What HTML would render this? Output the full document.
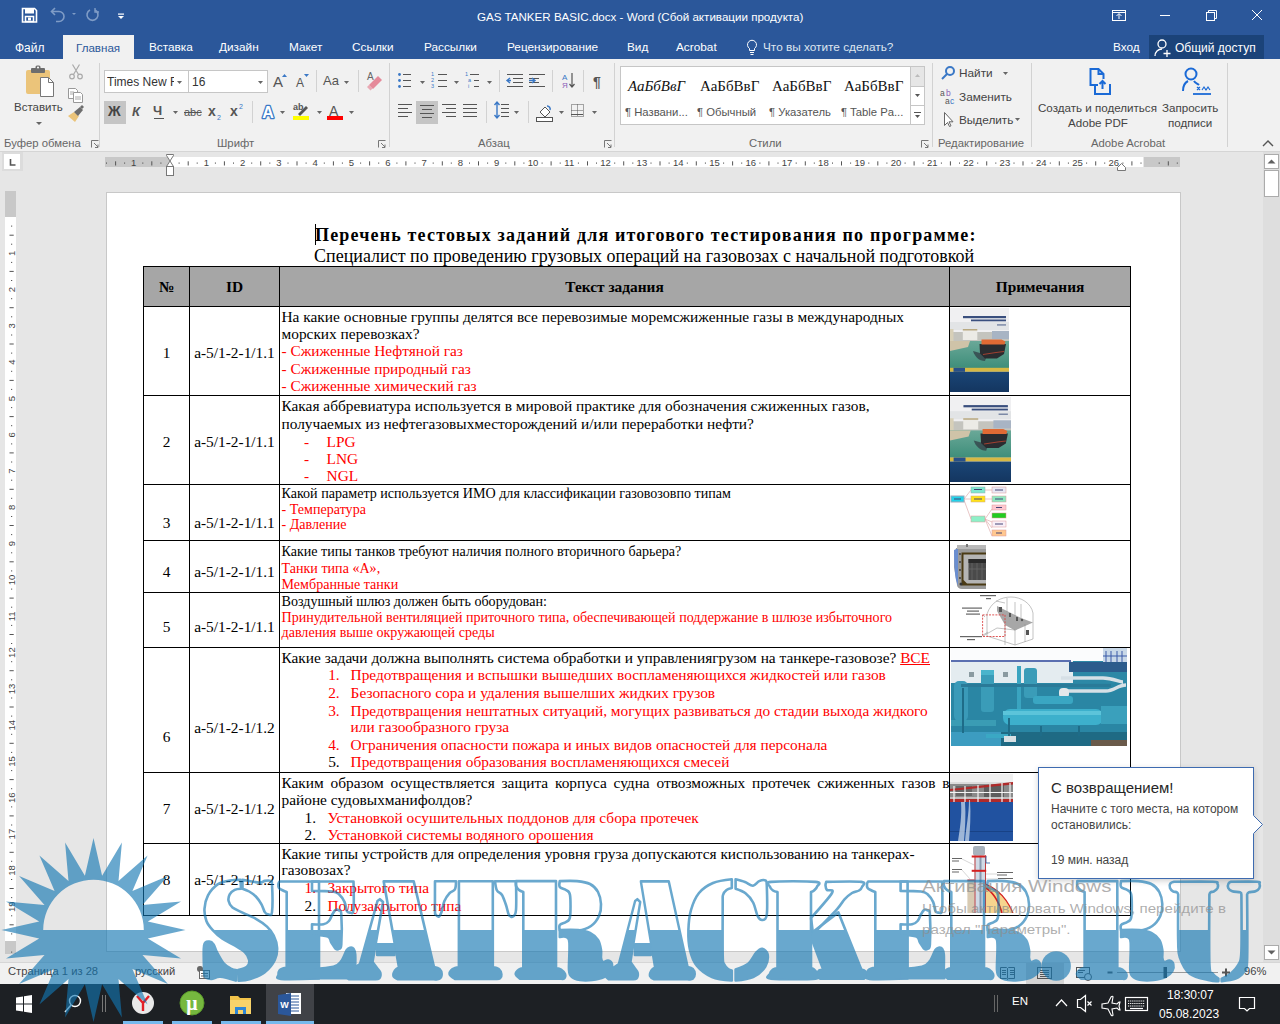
<!DOCTYPE html>
<html><head><meta charset="utf-8">
<style>
*{margin:0;padding:0;box-sizing:border-box}
html,body{width:1280px;height:1024px;overflow:hidden;background:#e6e6e6;font-family:"Liberation Sans",sans-serif;position:relative}
.a{position:absolute}
.s{position:absolute;font-family:"Liberation Serif",serif;white-space:nowrap;color:#000;line-height:1}
.u{position:absolute;font-family:"Liberation Sans",sans-serif;white-space:nowrap;line-height:1}
#titlebar{left:0;top:0;width:1280px;height:59px;background:#2b579a}
#ribbon{left:0;top:59px;width:1280px;height:93px;background:#f1f1f1;border-bottom:1px solid #d5d5d5}
#doc{left:0;top:152px;width:1263px;height:810px;background:#e6e6e6}
#page{left:107px;top:193px;width:1073px;height:758px;background:#fff;box-shadow:0 0 0 1px #c8c8c8}
#status{left:0;top:962px;width:1280px;height:22px;background:#f1f1f1}
#taskbar{left:0;top:984px;width:1280px;height:40px;background:#1f1f1f}

</style></head><body>
<div id="titlebar" class="a"></div>
<!-- QAT -->
<svg class="a" style="left:0;top:0" width="140" height="34">
  <g fill="none" stroke="#fff" stroke-width="1.6">
    <path d="M22.5 8.5h12l2 2v11.5h-14z"/>
  </g>
  <rect x="25" y="9" width="9" height="4.5" fill="#fff"/>
  <rect x="25.5" y="16.5" width="8" height="5" fill="none" stroke="#fff" stroke-width="1.5"/>
  <rect x="28" y="17.5" width="3" height="3" fill="#fff"/>
  <g fill="none" stroke="#7f9cc6" stroke-width="1.6">
    <path d="M52 11.5h7a5 5 0 0 1 0 10h-3"/>
    <path d="M55 8l-3.5 3.5 3.5 3.5"/>
    <path d="M90 10a5.5 5.5 0 1 0 5 0"/>
  </g>
  <path d="M72 13h4l-2 2z" fill="#7f9cc6"/>
  <path d="M95 8v4h4" fill="none" stroke="#7f9cc6" stroke-width="1.4"/>
  <rect x="118" y="13.5" width="6" height="1.2" fill="#fff"/>
  <path d="M118 16h6l-3 3z" fill="#fff"/>
</svg>
<div class="u" style="left:477px;top:11px;font-size:11.6px;color:#fff">GAS TANKER BASIC.docx - Word (Сбой активации продукта)</div>
<svg class="a" style="left:1100px;top:0" width="180" height="34">
  <g fill="none" stroke="#fff" stroke-width="1">
    <rect x="12.5" y="10.5" width="13" height="10"/>
    <path d="M12.5 12.5h13"/>
    <path d="M19 19v-5M16.5 16l2.5-2.5 2.5 2.5"/>
    <path d="M60 15.5h10"/>
    <rect x="106.5" y="12.5" width="8" height="8"/>
    <path d="M108.5 12.5v-2h8v8h-2"/>
    <path d="M152 10l10 10M162 10l-10 10"/>
  </g>
</svg>
<!-- tabs -->
<div class="a" style="left:63px;top:35px;width:71px;height:25px;background:#f1f1f1"></div>
<div class="u" style="left:15px;top:42px;font-size:12px;color:#fff">Файл</div>
<div class="u" style="left:76px;top:42px;font-size:11.6px;color:#2b579a">Главная</div>
<div class="u" style="left:149px;top:42px;font-size:11.8px;color:#fff">Вставка</div>
<div class="u" style="left:219px;top:42px;font-size:11.8px;color:#fff">Дизайн</div>
<div class="u" style="left:289px;top:42px;font-size:11.8px;color:#fff">Макет</div>
<div class="u" style="left:352px;top:42px;font-size:11.8px;color:#fff">Ссылки</div>
<div class="u" style="left:424px;top:42px;font-size:11.8px;color:#fff">Рассылки</div>
<div class="u" style="left:507px;top:42px;font-size:11.8px;color:#fff">Рецензирование</div>
<div class="u" style="left:627px;top:42px;font-size:11.8px;color:#fff">Вид</div>
<div class="u" style="left:676px;top:42px;font-size:11.8px;color:#fff">Acrobat</div>
<svg class="a" style="left:745px;top:38px" width="14" height="18"><g fill="none" stroke="#fff" stroke-width="1"><path d="M4.5 12.5v-2a4.5 4.5 0 1 1 5 0v2z"/><path d="M5 14.5h4M5.5 16.5h3"/></g></svg>
<div class="u" style="left:763px;top:42px;font-size:11.8px;color:#dfe6f0">Что вы хотите сделать?</div>
<div class="u" style="left:1113px;top:42px;font-size:11.8px;color:#fff">Вход</div>
<div class="a" style="left:1149px;top:35px;width:115px;height:24px;background:#1b4379"></div>
<svg class="a" style="left:1153px;top:37px" width="22" height="22"><g fill="none" stroke="#fff" stroke-width="1.3"><circle cx="9" cy="7" r="4"/><path d="M2 19c0-4 3-7 7-7"/><path d="M14 13v7M10.5 16.5h7"/></g></svg>
<div class="u" style="left:1175px;top:42px;font-size:12px;color:#fff">Общий доступ</div>
<div id="ribbon" class="a"></div>
<!-- separators -->
<div class="a" style="left:99px;top:63px;width:1px;height:84px;background:#d2d2d2"></div>
<div class="a" style="left:389px;top:63px;width:1px;height:84px;background:#d2d2d2"></div>
<div class="a" style="left:614px;top:63px;width:1px;height:84px;background:#d2d2d2"></div>
<div class="a" style="left:932px;top:63px;width:1px;height:84px;background:#d2d2d2"></div>
<div class="a" style="left:1031px;top:63px;width:1px;height:84px;background:#d2d2d2"></div>
<div class="a" style="left:1227px;top:63px;width:1px;height:84px;background:#d2d2d2"></div>
<!-- group labels -->
<div class="u" style="left:4px;top:138px;font-size:11.3px;color:#666">Буфер обмена</div>
<div class="u" style="left:217px;top:138px;font-size:11.3px;color:#666">Шрифт</div>
<div class="u" style="left:478px;top:138px;font-size:11.3px;color:#666">Абзац</div>
<div class="u" style="left:749px;top:138px;font-size:11.3px;color:#666">Стили</div>
<div class="u" style="left:938px;top:138px;font-size:11.3px;color:#666">Редактирование</div>
<div class="u" style="left:1091px;top:138px;font-size:11.3px;color:#666">Adobe Acrobat</div>
<svg class="a" style="left:0;top:136px" width="1280" height="14">
  <g fill="none" stroke="#777" stroke-width="1">
    <path d="M91.5 11.5v-7h7M91.5 4.5"/><path d="M94 7l4 4M98 8.5v3h-3"/>
    <path d="M378.5 11.5v-7h7"/><path d="M381 7l4 4M385 8.5v3h-3"/>
    <path d="M604.5 11.5v-7h7"/><path d="M607 7l4 4M611 8.5v3h-3"/>
    <path d="M921.5 11.5v-7h7"/><path d="M924 7l4 4M928 8.5v3h-3"/>
    <path d="M1263 10l5-5 5 5" stroke="#555" stroke-width="1.4"/>
  </g>
</svg>
<!-- clipboard -->
<svg class="a" style="left:0;top:59px" width="100" height="80">
  <path d="M26 13a2 2 0 0 1 2-2h20a2 2 0 0 1 2 2v22H28a2 2 0 0 1-2-2z" fill="#ebc47a"/>
  <rect x="31" y="9" width="14" height="5" rx="1" fill="#6d6d6d"/>
  <rect x="35.5" y="6.5" width="5" height="4" rx="1.5" fill="#6d6d6d"/>
  <circle cx="38" cy="8.5" r="1" fill="#fff"/>
  <path d="M40.5 18.5h8l5 5v14h-13z" fill="#fff" stroke="#777" stroke-width="1"/>
  <path d="M48.5 18.5v5h5" fill="none" stroke="#777" stroke-width="1"/>
  <path d="M36 63h6l-3 3z" fill="#666"/>
  <!-- cut -->
  <g fill="none" stroke="#aaa" stroke-width="1.2"><circle cx="72" cy="76" r="0"/><circle cx="72" cy="17.5" r="2.3"/><circle cx="80" cy="17.5" r="2.3"/><path d="M72.5 5.5l6 10M79.5 5.5l-6 10"/></g>
  <!-- copy -->
  <g fill="#fff" stroke="#999" stroke-width="1"><path d="M68.5 29.5h7l2 2v8h-9z"/><path d="M73.5 33.5h7l2 2v8h-9z"/></g>
  <g stroke="#aaa" stroke-width="1"><path d="M70 33h4M70 35h3M75 38h6M75 40h6"/></g>
  <!-- painter -->
  <path d="M68 57l6-4 5 4-4 6z" fill="#ebc47a"/>
  <path d="M74 53l6-5 3 3-5 6z" fill="#6d6d6d"/>
  <path d="M80 48l2-2 2 2-2 2z" fill="#6d6d6d"/>
</svg>
<div class="u" style="left:14px;top:102px;font-size:11.5px;color:#444">Вставить</div>
<!-- font group -->
<div class="a" style="left:104px;top:70px;width:85px;height:23px;background:#fff;border:1px solid #c6c6c6"></div>
<div class="a" style="left:188px;top:70px;width:80px;height:23px;background:#fff;border:1px solid #c6c6c6"></div>
<div class="u" style="left:107px;top:76px;font-size:12px;color:#333;width:67px;overflow:hidden">Times New Roman</div>
<div class="u" style="left:192px;top:76px;font-size:12px;color:#333">16</div>
<div class="a" style="left:104px;top:101px;width:22px;height:23px;background:#c5c5c5"></div>
<svg class="a" style="left:100px;top:59px" width="290" height="70">
  <g fill="#666">
    <path d="M77 22h5l-2.5 3z"/><path d="M158 22h5l-2.5 3z"/>
    <path d="M244 22h5l-2.5 3z"/>
    <path d="M73 52h5l-2.5 3z"/>
    <path d="M180 52h5l-2.5 3z"/><path d="M217 52h5l-2.5 3z"/><path d="M249 52h5l-2.5 3z"/>
  </g>
  <g fill="#3a78c6"><path d="M182 18h5l-2.5-3z"/><path d="M204 15h5l-2.5 3z"/></g>
  <g fill="none" stroke="#d2d2d2"><path d="M216.5 11v22M258.5 11v22M152.5 42v22"/></g>
</svg>
<div class="u" style="left:273px;top:74px;font-size:15px;color:#555">A</div>
<div class="u" style="left:296px;top:77px;font-size:12px;color:#555">A</div>
<div class="u" style="left:323px;top:74px;font-size:13px;color:#555">Aa</div>
<div class="u" style="left:367px;top:72px;font-size:10px;color:#666">A</div>
<svg class="a" style="left:360px;top:65px" width="30" height="30"><path d="M9 20l9-9 4 4-9 9z" fill="#e58a9a"/><path d="M9 20l3.5 3.5 -2 2-3.5-3.5z" fill="#e58a9a" opacity="0.7"/></svg>
<div class="u" style="left:108px;top:104px;font-size:14px;font-weight:bold;color:#444">Ж</div>
<div class="u" style="left:132px;top:105px;font-size:13px;font-style:italic;font-weight:bold;color:#555">К</div>
<div class="u" style="left:153px;top:104px;font-size:13px;font-weight:bold;color:#555">Ч</div>
<div class="a" style="left:154px;top:118px;width:10px;height:1px;background:#555"></div>
<div class="u" style="left:184px;top:107px;font-size:11px;color:#555;text-decoration:line-through">abc</div>
<div class="u" style="left:208px;top:104px;font-size:14px;font-weight:bold;color:#555">x</div>
<div class="u" style="left:217px;top:114px;font-size:7px;color:#3a78c6">2</div>
<div class="u" style="left:230px;top:104px;font-size:14px;font-weight:bold;color:#555">x</div>
<div class="u" style="left:239px;top:103px;font-size:7px;color:#3a78c6">2</div>
<svg class="a" style="left:258px;top:100px" width="22" height="22"><text x="10" y="18" text-anchor="middle" font-family="Liberation Sans" font-size="16" font-weight="bold" fill="#fff" stroke="#3a78c6" stroke-width="2.6" stroke-linejoin="round" paint-order="stroke">A</text></svg>
<div class="u" style="left:293px;top:103px;font-size:9px;font-weight:bold;color:#555">ab</div>
<svg class="a" style="left:290px;top:100px" width="60" height="22">
  <path d="M8 14l8-8 2 2-8 8z" fill="#555"/>
  <rect x="3" y="16" width="16" height="4" fill="#ffff00"/>
  <rect x="37" y="16" width="16" height="4" fill="#ff0000"/>
</svg>
<div class="u" style="left:329px;top:104px;font-size:14px;color:#555">A</div>
<!-- paragraph -->
<svg class="a" style="left:390px;top:59px" width="225" height="70">
  <g fill="#3a78c6"><circle cx="9.5" cy="15.5" r="1.4"/><circle cx="9.5" cy="21.5" r="1.4"/><circle cx="9.5" cy="27.5" r="1.4"/></g>
  <g stroke="#555" stroke-width="1"><path d="M13 15.5h8M13 21.5h8M13 27.5h8"/>
   <path d="M48 15.5h9M48 21.5h9M48 27.5h9"/>
   <path d="M80 15.5h9M84 21.5h5M84 27.5h5"/>
   <path d="M117 15.5h16M123 19.5h10M123 23.5h10M117 27.5h16"/>
   <path d="M139 15.5h16M139 19.5h10M139 23.5h10M139 27.5h16"/>
   <path d="M8 45.5h14M8 49.5h10M8 53.5h14M8 57.5h10"/>
   <path d="M30 45.5h14M32 49.5h10M30 53.5h14M32 57.5h10"/>
   <path d="M52 45.5h14M56 49.5h10M52 53.5h14M56 57.5h10"/>
   <path d="M73 45.5h14M73 49.5h14M73 53.5h14M73 57.5h14"/>
   <path d="M111 45.5h8M111 49.5h8M111 53.5h8M111 57.5h8"/>
   <path d="M181 55.5h12"/>
  </g>
  <g fill="#3a78c6" font-family="Liberation Sans" font-size="5.5"><text x="41" y="17">1</text><text x="41" y="23">2</text><text x="41" y="29">3</text><text x="75" y="17">1</text><text x="78" y="23">a</text><text x="78" y="29">i</text></g>
  <g fill="#666"><path d="M30 22h5l-2.5 3z"/><path d="M64 22h5l-2.5 3z"/><path d="M97 22h5l-2.5 3z"/>
   <path d="M124 52h5l-2.5 3z"/><path d="M169 52h5l-2.5 3z"/><path d="M202 52h5l-2.5 3z"/></g>
  <g fill="none" stroke="#3a78c6" stroke-width="1.4"><path d="M121 21.5h-4M120 19l-3 2.5 3 2.5"/><path d="M139 21.5h5M142 19l3 2.5-3 2.5"/>
   <path d="M107 43v16M104.5 46l2.5-3 2.5 3M104.5 56l2.5 3 2.5-3"/></g>
  <text x="172" y="21" font-family="Liberation Sans" font-size="8" fill="#3a78c6">A</text>
  <text x="172" y="29" font-family="Liberation Sans" font-size="8" fill="#8b5db8">Я</text>
  <path d="M182 14v14M179.5 25l2.5 3 2.5-3" fill="none" stroke="#555" stroke-width="1.2"/>
  <text x="203" y="28" font-family="Liberation Sans" font-size="14" font-weight="bold" fill="#555">¶</text>
  <g fill="none" stroke="#d2d2d2"><path d="M109.5 11v22M162.5 11v22M193.5 11v22M96.5 42v22M138.5 42v22"/></g>
  <path d="M150 53l5-5 5 5-5 5z" fill="#fff" stroke="#555"/>
  <path d="M157 47a3 3 0 0 1 3 4" fill="none" stroke="#3a78c6" stroke-width="1.5"/>
  <rect x="146.5" y="58.5" width="16" height="4" fill="#fff" stroke="#555"/>
  <g fill="none" stroke="#555" stroke-dasharray="1 1"><rect x="181.5" y="45.5" width="12" height="12"/><path d="M187.5 45.5v12M181.5 51.5h12"/></g>
</svg>
<div class="a" style="left:416px;top:101px;width:22px;height:23px;background:#c5c5c5"></div>
<svg class="a" style="left:416px;top:101px" width="22" height="23"><path d="M4 4.5h14M6 8.5h10M4 12.5h14M6 16.5h10" stroke="#555" stroke-width="1"/></svg>
<!-- styles gallery -->
<div class="a" style="left:620px;top:66px;width:305px;height:59px;background:#fff;border:1px solid #c6c6c6"></div>
<div class="a" style="left:910px;top:66px;width:15px;height:59px;border:1px solid #c6c6c6;background:#fff"></div>
<div class="a" style="left:911px;top:67px;width:13px;height:19px;background:#e6e6e6"></div>
<div class="a" style="left:910px;top:86px;width:15px;height:1px;background:#c6c6c6"></div>
<div class="a" style="left:910px;top:105px;width:15px;height:1px;background:#c6c6c6"></div>
<svg class="a" style="left:910px;top:66px" width="15" height="59"><path d="M5 11l2.5-3 2.5 3z" fill="#bbb"/><path d="M5 28h5l-2.5 3z" fill="#555"/><path d="M4 46.5h7" stroke="#555"/><path d="M5 49h5l-2.5 3z" fill="#555"/></svg>
<div class="s" style="left:628px;top:79px;font-size:15px;font-style:italic;color:#111">АаБбВвГ</div>
<div class="s" style="left:700px;top:79px;font-size:15px;color:#111">АаБбВвГ</div>
<div class="s" style="left:772px;top:79px;font-size:15px;color:#111">АаБбВвГ</div>
<div class="s" style="left:844px;top:79px;font-size:15px;color:#111">АаБбВвГ</div>
<div class="u" style="left:625px;top:107px;font-size:11.3px;color:#555">¶ Названи...</div>
<div class="u" style="left:697px;top:107px;font-size:11.3px;color:#555">¶ Обычный</div>
<div class="u" style="left:769px;top:107px;font-size:11.3px;color:#555">¶ Указатель</div>
<div class="u" style="left:841px;top:107px;font-size:11.3px;color:#555">¶ Table Pa...</div>
<!-- editing -->
<svg class="a" style="left:935px;top:59px" width="95" height="75">
  <g fill="none" stroke="#3a78c6" stroke-width="2"><circle cx="15" cy="12" r="4"/><path d="M12 15l-5 5"/></g>
  <path d="M68 13h5l-2.5 3z" fill="#666"/>
  <path d="M80 59h5l-2.5 3z" fill="#666"/>
  <text x="5" y="37" font-family="Liberation Sans" font-size="8.5" fill="#555">a</text>
  <text x="11" y="37" font-family="Liberation Sans" font-size="8.5" fill="#8b5db8">b</text>
  <text x="10" y="45" font-family="Liberation Sans" font-size="8.5" fill="#555">a</text>
  <text x="15" y="45" font-family="Liberation Sans" font-size="8.5" fill="#3a78c6">c</text>
  <path d="M9.5 53.5v13l3-3 2 4 1.5-.7-2-4h4z" fill="#fff" stroke="#666" stroke-width="1"/>
</svg>
<div class="u" style="left:959px;top:68px;font-size:11.8px;color:#444">Найти</div>
<div class="u" style="left:959px;top:92px;font-size:11.8px;color:#444">Заменить</div>
<div class="u" style="left:959px;top:114.5px;font-size:11.8px;color:#444">Выделить</div>
<!-- acrobat -->
<svg class="a" style="left:1080px;top:62px" width="150" height="36">
  <g fill="none" stroke="#1b6ad6" stroke-width="2">
    <path d="M18 23h-7.5V7h8l5 5v5"/><path d="M18.5 7v5h5"/>
    <path d="M15 22v10h15V22"/><path d="M22.5 27v-8M19.5 22l3-3 3 3"/>
    <circle cx="111" cy="12" r="5.5"/><path d="M103 29c0-6 3-9 5-10M114 19c1 2 4 3 5 4"/>
    <path d="M113 32h18" stroke-width="1.8"/>
  </g>
  <path d="M117 25l3 3M120 25l-3 3M122 28l2-3 2 3 2-3 2 3" fill="none" stroke="#1b6ad6" stroke-width="1.2"/>
</svg>
<div class="u" style="left:1038px;top:102px;font-size:11.6px;color:#444">Создать и поделиться</div>
<div class="u" style="left:1068px;top:117px;font-size:11.6px;color:#444">Adobe PDF</div>
<div class="u" style="left:1162px;top:102px;font-size:11.6px;color:#444">Запросить</div>
<div class="u" style="left:1168px;top:117px;font-size:11.6px;color:#444">подписи</div>
<div id="doc" class="a"></div>
<div id="page" class="a">
</div>
<div class="s" style="left:315px;top:225.62px;font-size:18px;font-weight:bold;letter-spacing:1.17px;">Перечень тестовых заданий для итогового тестирования по программе:</div>
<div class="s" style="left:314px;top:246.93px;font-size:18px;">Специалист по проведению грузовых операций на газовозах с начальной подготовкой</div>
<div class="a" style="left:315px;top:224px;width:1px;height:21px;background:#000"></div>
<div class="a" style="left:143px;top:266px;width:988px;height:41px;background:#a6a6a6"></div>
<div class="a" style="left:143px;top:266px;width:1px;height:650px;background:#000"></div>
<div class="a" style="left:189px;top:266px;width:1px;height:650px;background:#000"></div>
<div class="a" style="left:279px;top:266px;width:1px;height:650px;background:#000"></div>
<div class="a" style="left:949px;top:266px;width:1px;height:650px;background:#000"></div>
<div class="a" style="left:1130px;top:266px;width:1px;height:650px;background:#000"></div>
<div class="a" style="left:143px;top:266px;width:988px;height:1px;background:#000"></div>
<div class="a" style="left:143px;top:306px;width:988px;height:1px;background:#000"></div>
<div class="a" style="left:143px;top:395px;width:988px;height:1px;background:#000"></div>
<div class="a" style="left:143px;top:484px;width:988px;height:1px;background:#000"></div>
<div class="a" style="left:143px;top:540px;width:988px;height:1px;background:#000"></div>
<div class="a" style="left:143px;top:592px;width:988px;height:1px;background:#000"></div>
<div class="a" style="left:143px;top:647px;width:988px;height:1px;background:#000"></div>
<div class="a" style="left:143px;top:772px;width:988px;height:1px;background:#000"></div>
<div class="a" style="left:143px;top:843px;width:988px;height:1px;background:#000"></div>
<div class="a" style="left:143px;top:915px;width:988px;height:1px;background:#000"></div>
<div class="s" style="left:66.5px;width:200px;text-align:center;top:278.64px;font-size:15.36px;font-weight:bold;">№</div>
<div class="s" style="left:134.5px;width:200px;text-align:center;top:278.64px;font-size:15.36px;font-weight:bold;">ID</div>
<div class="s" style="left:514.5px;width:200px;text-align:center;top:278.64px;font-size:15.36px;font-weight:bold;">Текст задания</div>
<div class="s" style="left:940.0px;width:200px;text-align:center;top:278.64px;font-size:15.36px;font-weight:bold;">Примечания</div>
<div class="s" style="left:66.5px;width:200px;text-align:center;top:344.74px;font-size:15.36px;">1</div>
<div class="s" style="left:134.5px;width:200px;text-align:center;top:344.74px;font-size:15.36px;">a-5/1-2-1/1.1</div>
<div class="s" style="left:66.5px;width:200px;text-align:center;top:433.74px;font-size:15.36px;">2</div>
<div class="s" style="left:134.5px;width:200px;text-align:center;top:433.74px;font-size:15.36px;">a-5/1-2-1/1.1</div>
<div class="s" style="left:66.5px;width:200px;text-align:center;top:514.74px;font-size:15.36px;">3</div>
<div class="s" style="left:134.5px;width:200px;text-align:center;top:514.74px;font-size:15.36px;">a-5/1-2-1/1.1</div>
<div class="s" style="left:66.5px;width:200px;text-align:center;top:563.94px;font-size:15.36px;">4</div>
<div class="s" style="left:134.5px;width:200px;text-align:center;top:563.94px;font-size:15.36px;">a-5/1-2-1/1.1</div>
<div class="s" style="left:66.5px;width:200px;text-align:center;top:619.14px;font-size:15.36px;">5</div>
<div class="s" style="left:134.5px;width:200px;text-align:center;top:619.14px;font-size:15.36px;">a-5/1-2-1/1.1</div>
<div class="s" style="left:66.5px;width:200px;text-align:center;top:729.14px;font-size:15.36px;">6</div>
<div class="s" style="left:134.5px;width:200px;text-align:center;top:719.74px;font-size:15.36px;">a-5/1-2-1/1.2</div>
<div class="s" style="left:66.5px;width:200px;text-align:center;top:800.74px;font-size:15.36px;">7</div>
<div class="s" style="left:134.5px;width:200px;text-align:center;top:800.74px;font-size:15.36px;">a-5/1-2-1/1.2</div>
<div class="s" style="left:66.5px;width:200px;text-align:center;top:872.14px;font-size:15.36px;">8</div>
<div class="s" style="left:134.5px;width:200px;text-align:center;top:872.14px;font-size:15.36px;">a-5/1-2-1/1.2</div>
<div class="s" style="left:281.5px;top:309.04px;font-size:15.36px;">На какие основные группы делятся все перевозимые моремсжиженные газы в международных</div>
<div class="s" style="left:281.5px;top:325.94px;font-size:15.36px;">морских перевозках?</div>
<div class="s" style="left:281.5px;top:343.44px;font-size:15.36px;color:#f00;">- Сжиженные Нефтяной газ</div>
<div class="s" style="left:281.5px;top:361.34px;font-size:15.36px;color:#f00;">- Сжиженные природный газ</div>
<div class="s" style="left:281.5px;top:378.44px;font-size:15.36px;color:#f00;">- Сжиженные химический газ</div>
<div class="s" style="left:281.5px;top:398.04px;font-size:15.36px;">Какая аббревиатура используется в мировой практике для обозначения сжиженных газов,</div>
<div class="s" style="left:281.5px;top:415.54px;font-size:15.36px;">получаемых из нефтегазовыхместорождений и/или переработки нефти?</div>
<div class="s" style="left:304px;top:433.74px;font-size:15.36px;color:#f00;">-</div>
<div class="s" style="left:326.6px;top:433.74px;font-size:15.36px;color:#f00;">LPG</div>
<div class="s" style="left:304px;top:450.94px;font-size:15.36px;color:#f00;">-</div>
<div class="s" style="left:326.6px;top:450.94px;font-size:15.36px;color:#f00;">LNG</div>
<div class="s" style="left:304px;top:468.44px;font-size:15.36px;color:#f00;">-</div>
<div class="s" style="left:326.6px;top:468.44px;font-size:15.36px;color:#f00;">NGL</div>
<div class="s" style="left:281.5px;top:486.01px;font-size:14.08px;">Какой параметр используется ИМО для классификации газовозовпо типам</div>
<div class="s" style="left:281.5px;top:501.71px;font-size:14.08px;color:#f00;">- Температура</div>
<div class="s" style="left:281.5px;top:517.21px;font-size:14.08px;color:#f00;">- Давление</div>
<div class="s" style="left:281.5px;top:544.01px;font-size:14.08px;">Какие типы танков требуют наличия полного вторичного барьера?</div>
<div class="s" style="left:281.5px;top:560.91px;font-size:14.08px;color:#f00;">Танки типа «А»,</div>
<div class="s" style="left:281.5px;top:576.81px;font-size:14.08px;color:#f00;">Мембранные танки</div>
<div class="s" style="left:281.5px;top:593.71px;font-size:14.08px;">Воздушный шлюз должен быть оборудован:</div>
<div class="s" style="left:281.5px;top:609.61px;font-size:14.08px;color:#f00;">Принудительной вентиляцией приточного типа, обеспечивающей поддержание в шлюзе избыточного</div>
<div class="s" style="left:281.5px;top:625.21px;font-size:14.08px;color:#f00;">давления выше окружающей среды</div>
<div class="s" style="left:281.5px;top:650.04px;font-size:15.36px;">Какие задачи должна выполнять система обработки и управлениягрузом на танкере-газовозе? <span style="color:#f00;text-decoration:underline">ВСЕ</span></div>
<div class="s" style="left:328.2px;top:667.14px;font-size:15.36px;color:#f00;">1.</div>
<div class="s" style="left:350.6px;top:667.14px;font-size:15.36px;color:#f00;">Предотвращения и вспышки вышедших воспламеняющихся жидкостей или газов</div>
<div class="s" style="left:328.2px;top:684.94px;font-size:15.36px;color:#f00;">2.</div>
<div class="s" style="left:350.6px;top:684.94px;font-size:15.36px;color:#f00;">Безопасного сора и удаления вышелших жидких грузов</div>
<div class="s" style="left:328.2px;top:702.64px;font-size:15.36px;color:#f00;">3.</div>
<div class="s" style="left:350.6px;top:702.64px;font-size:15.36px;color:#f00;">Предотвращения нештатных ситуаций, могущих развиваться до стадии выхода жидкого</div>
<div class="s" style="left:350.6px;top:719.44px;font-size:15.36px;color:#f00;">или газообразного груза</div>
<div class="s" style="left:328.2px;top:737.34px;font-size:15.36px;color:#f00;">4.</div>
<div class="s" style="left:350.6px;top:737.34px;font-size:15.36px;color:#f00;">Ограничения опасности пожара и иных видов опасностей для персонала</div>
<div class="s" style="left:328.2px;top:754.44px;font-size:15.36px;">5.</div>
<div class="s" style="left:350.6px;top:754.44px;font-size:15.36px;color:#f00;">Предотвращения образования воспламеняющихся смесей</div>
<div class="s" style="left:281.5px;top:775.04px;font-size:15.36px;width:668px;text-align:justify;text-align-last:justify;">Каким образом осуществляется защита корпуса судна отвозможных протечек сжиженных газов в</div>
<div class="s" style="left:281.5px;top:791.64px;font-size:15.36px;">районе судовыхманифолдов?</div>
<div class="s" style="left:304.5px;top:809.54px;font-size:15.36px;">1.</div>
<div class="s" style="left:327.4px;top:809.54px;font-size:15.36px;color:#f00;">Установкой осушительных поддонов для сбора протечек</div>
<div class="s" style="left:304.5px;top:827.14px;font-size:15.36px;">2.</div>
<div class="s" style="left:327.4px;top:827.14px;font-size:15.36px;color:#f00;">Установкой системы водяного орошения</div>
<div class="s" style="left:281.5px;top:845.54px;font-size:15.36px;">Какие типы устройств для определения уровня груза допускаются киспользованию на танкерах-</div>
<div class="s" style="left:281.5px;top:862.34px;font-size:15.36px;">газовозах?</div>
<div class="s" style="left:304.5px;top:880.04px;font-size:15.36px;color:#f00;">1.</div>
<div class="s" style="left:327.4px;top:880.04px;font-size:15.36px;color:#f00;">Закрытого типа</div>
<div class="s" style="left:304.5px;top:897.74px;font-size:15.36px;">2.</div>
<div class="s" style="left:327.4px;top:897.74px;font-size:15.36px;color:#f00;">Полузакрытого типа</div>
<svg class="a" style="left:950px;top:308px" width="59" height="84" viewBox="0 0 59 84" preserveAspectRatio="none">
<defs><linearGradient id="seaa" x1="0" y1="0" x2="0" y2="1"><stop offset="0" stop-color="#6aa898"/><stop offset="1" stop-color="#3e8e7a"/></linearGradient>
<linearGradient id="nva" x1="0" y1="0" x2="0" y2="1"><stop offset="0" stop-color="#1a4576"/><stop offset="1" stop-color="#143660"/></linearGradient></defs>
<rect width="59" height="84" fill="#f0f0f2"/>
<rect x="0" y="14" width="59" height="8" fill="#e2e4e6"/>
<g fill="#3a4f7e"><rect x="13" y="8" width="43" height="2.2"/><rect x="21" y="11.5" width="35" height="1.8"/><rect x="47" y="16.5" width="9" height="0.9"/></g>
<rect x="0" y="24" width="59" height="10" fill="#c4c4be"/>
<rect x="12.8" y="21" width="14.5" height="11" fill="#ecebe6"/>
<rect x="12.8" y="21" width="14.5" height="1.5" fill="#b8a880"/>
<rect x="0" y="21" width="3.5" height="12" fill="#d8d0b8"/>
<rect x="42" y="23" width="17" height="8" fill="#a8b4c4"/>
<rect x="0" y="33" width="59" height="27" fill="url(#seaa)"/>
<path d="M0 33h20l-2 6-18 4z" fill="#cfc3a8"/>
<path d="M23 43c2 6 6 10 12 10l2-6z" fill="#33434a" opacity="0.8"/>
<path d="M29.5 36h26.5l-2 10-7 4.5h-12l-5-5z" fill="#2a2c30"/>
<path d="M33 46.5l13-2 8-1" fill="none" stroke="#a04030" stroke-width="1"/>
<path d="M31.5 31.5h20l4 2-1 3h-23z" fill="#e06a34"/>
<rect x="0" y="59.8" width="59" height="4" fill="#d6b844"/>
<rect x="3.5" y="59.8" width="11.5" height="4" fill="#28508a"/>
<rect x="0" y="63.8" width="59" height="20.2" fill="url(#nva)"/>
</svg>
<svg class="a" style="left:950px;top:397px" width="61" height="85" viewBox="0 0 59 84" preserveAspectRatio="none">
<defs><linearGradient id="seab" x1="0" y1="0" x2="0" y2="1"><stop offset="0" stop-color="#6aa898"/><stop offset="1" stop-color="#3e8e7a"/></linearGradient>
<linearGradient id="nvb" x1="0" y1="0" x2="0" y2="1"><stop offset="0" stop-color="#1a4576"/><stop offset="1" stop-color="#143660"/></linearGradient></defs>
<rect width="59" height="84" fill="#f0f0f2"/>
<rect x="0" y="14" width="59" height="8" fill="#e2e4e6"/>
<g fill="#3a4f7e"><rect x="13" y="8" width="43" height="2.2"/><rect x="21" y="11.5" width="35" height="1.8"/><rect x="47" y="16.5" width="9" height="0.9"/></g>
<rect x="0" y="24" width="59" height="10" fill="#c4c4be"/>
<rect x="12.8" y="21" width="14.5" height="11" fill="#ecebe6"/>
<rect x="12.8" y="21" width="14.5" height="1.5" fill="#b8a880"/>
<rect x="0" y="21" width="3.5" height="12" fill="#d8d0b8"/>
<rect x="42" y="23" width="17" height="8" fill="#a8b4c4"/>
<rect x="0" y="33" width="59" height="27" fill="url(#seab)"/>
<path d="M0 33h20l-2 6-18 4z" fill="#cfc3a8"/>
<path d="M23 43c2 6 6 10 12 10l2-6z" fill="#33434a" opacity="0.8"/>
<path d="M29.5 36h26.5l-2 10-7 4.5h-12l-5-5z" fill="#2a2c30"/>
<path d="M33 46.5l13-2 8-1" fill="none" stroke="#a04030" stroke-width="1"/>
<path d="M31.5 31.5h20l4 2-1 3h-23z" fill="#e06a34"/>
<rect x="0" y="59.8" width="59" height="4" fill="#d6b844"/>
<rect x="3.5" y="59.8" width="11.5" height="4" fill="#28508a"/>
<rect x="0" y="63.8" width="59" height="20.2" fill="url(#nvb)"/>
</svg>
<svg class="a" style="left:950px;top:485px" width="57" height="53" viewBox="0 0 57 53">
<g stroke="#d8a0a0" stroke-width="0.6" fill="none"><path d="M14 14L21 5M14 14h7M14 15l7 19M35 5h7M35 14h7M35 34l7-10M35 34l7 3M35 34l7 9M35 34l7 17"/></g>
<rect x="1" y="11" width="13" height="6" fill="#22d3ea" stroke="#9ab"/>
<rect x="21" y="2" width="14" height="6" fill="#7ee8d0" stroke="#9aa" stroke-width="0.5"/>
<rect x="21" y="11" width="14" height="6" fill="#ffe21a" stroke="#ca8" stroke-width="0.5"/>
<rect x="21" y="31" width="14" height="6" fill="#8ef0c8" stroke="#d99" stroke-width="0.5"/>
<rect x="42" y="2" width="14" height="6" fill="#e8e8f4" stroke="#d99" stroke-width="0.5"/>
<rect x="42" y="11" width="14" height="6" fill="#8ee8c0" stroke="#d99" stroke-width="0.5"/>
<rect x="42" y="20" width="14" height="5" fill="#ffc8d0" stroke="#d99" stroke-width="0.5"/>
<rect x="42" y="28" width="14" height="5" fill="#22cc22" stroke="#d99" stroke-width="0.5"/>
<rect x="42" y="36" width="14" height="6" fill="#f8f0f8" stroke="#d99" stroke-width="0.5"/>
<rect x="42" y="45" width="14" height="6" fill="#ffc890" stroke="#d99" stroke-width="0.5"/>
<g fill="#447"><rect x="24" y="4" width="8" height="1"/><rect x="24" y="13.5" width="8" height="1"/><rect x="45" y="4.5" width="8" height="1"/><rect x="45" y="13.5" width="8" height="1"/><rect x="4" y="13.5" width="7" height="1"/><rect x="46" y="22" width="6" height="1"/><rect x="45" y="38.5" width="8" height="1"/><rect x="46" y="47.5" width="6" height="1"/></g>
</svg>
<svg class="a" style="left:953px;top:544px" width="33" height="46" viewBox="0 0 33 46">
<path d="M3 4h30v41H9c-3 0-5-2-5-4l-3-18c0-8 1-14 2-19z" fill="#9a9a9a"/>
<path d="M1 6c3-1 4-2 4-2v38l-2-6c-1-6-2-14-2-30z" fill="#6a8ed0"/>
<rect x="4" y="1" width="29" height="4" fill="#b8b8b8"/>
<rect x="13" y="0" width="2" height="3" fill="#777"/>
<rect x="8.5" y="8.5" width="24.5" height="33" fill="#4a3a14"/>
<path d="M10.5 10.5h22.5v29H14l-3.5-3.5z" fill="#b4b4b4"/>
<rect x="15.5" y="15" width="17.5" height="21" fill="#4a4a4a"/>
<rect x="15.5" y="15" width="17.5" height="4" fill="#2a2a2a"/>
<path d="M15.5 25h17.5M24 19v17M19 19v17M29 19v17" stroke="#6a6a6a" stroke-width="0.7"/>
<g fill="#333"><circle cx="7" cy="10" r="0.9"/><circle cx="7" cy="18" r="0.9"/><circle cx="7" cy="26" r="0.9"/><circle cx="7" cy="34" r="0.9"/><circle cx="8" cy="40" r="1.5"/></g>
</svg>
<svg class="a" style="left:959px;top:594px" width="76" height="52" viewBox="0 0 76 52">
<g fill="none" stroke="#9a9a9a" stroke-width="0.6">
<path d="M28 20C32 8 42 3 52 3c10 0 20 6 22 16v26L56 51"/>
<path d="M28 20v22l28 9M46 31v20M56 36v15M66 30v18M24 42l14-8 18 2"/>
<path d="M48 4v14M56 8v14M62 10v16"/>
</g>
<path d="M38 12l24 12 12 4.5-18 8-10-5.5-8-14z" fill="#8a8a8a" opacity="0.75"/>
<g fill="#555"><rect x="40" y="13" width="3" height="5"/><rect x="50" y="19" width="2" height="4"/><rect x="57" y="23" width="2" height="4"/><rect x="67" y="36" width="3" height="5"/><circle cx="63" cy="26" r="1.2"/></g>
<rect x="23.6" y="20.9" width="22.4" height="21.6" fill="none" stroke="#d44" stroke-width="0.9" stroke-dasharray="2 1.2"/>
<g fill="#666"><rect x="21" y="1" width="16" height="1.2"/><rect x="27" y="4" width="5" height="1.2"/><rect x="3" y="13.5" width="20" height="1.2"/><rect x="8" y="16.5" width="12" height="1.2"/><rect x="7" y="19.5" width="14" height="1.2"/><rect x="1" y="42" width="22" height="1.2"/><rect x="8" y="45" width="8" height="1.2"/></g>
<path d="M37 7l9 2M24 21l2 2M24 41l5-3" stroke="#888" stroke-width="0.5"/>
</svg>
<svg class="a" style="left:951px;top:648px" width="176" height="98" viewBox="0 0 176 98">
<rect width="176" height="98" fill="#2d88a6"/>
<rect x="0" y="0" width="176" height="13" fill="#fbfcfd"/>
<rect x="0" y="13" width="122" height="22" fill="#e4ecf0"/>
<rect x="0" y="12" width="120" height="2" fill="#5a6fb0"/>
<rect x="18" y="24" width="5" height="5" fill="#8a9aa0"/><rect x="52" y="24" width="5" height="5" fill="#8a9aa0"/>
<rect x="152" y="0" width="24" height="18" fill="#c8d8e8"/>
<path d="M155 3v14M160 3v14M166 3v14M171 3v14M152 8h24" stroke="#3a5aa8" stroke-width="1"/>
<rect x="118" y="14" width="58" height="10" fill="#2c5c8c"/>
<rect x="0" y="35" width="176" height="63" fill="#2a86a4"/>
<rect x="3" y="33" width="14" height="40" rx="5" fill="#3a9ab8"/>
<rect x="30" y="22" width="13" height="42" rx="3" fill="#3a9cb8"/>
<rect x="30" y="22" width="13" height="5" fill="#4ab4cc"/>
<rect x="73" y="20" width="13" height="30" rx="3" fill="#3a9cb8"/>
<rect x="66" y="18" width="4" height="45" fill="#3aa4c0"/>
<rect x="10" y="36" width="150" height="3" fill="#2a7a98"/>
<path d="M110 30h42c10 0 16 4 20 4M115 43h40c8 0 12-6 20-6" fill="none" stroke="#d6e0e6" stroke-width="3.5"/>
<rect x="108" y="40" width="10" height="10" rx="4" fill="#e4e8ea"/>
<rect x="52" y="61" width="100" height="16" rx="7" fill="#3db0cc"/>
<rect x="52" y="63" width="100" height="4" fill="#5cc4da"/>
<rect x="150" y="58" width="26" height="18" fill="#3aa0bc"/>
<rect x="82" y="48" width="40" height="8" rx="3" fill="#3aa6c2"/>
<rect x="0" y="72" width="45" height="6" fill="#3a9cb4"/>
<rect x="0" y="84" width="176" height="14" fill="#1f6a84"/>
<rect x="0" y="84" width="50" height="14" fill="#3c9cc0"/>
<rect x="35" y="86" width="25" height="4" fill="#3aa8c4"/>
<rect x="53" y="88" width="12" height="6" fill="#d8e0e4"/>
<path d="M12 40v45M58 70v18M90 78v10M128 78v10" stroke="#1e6c88" stroke-width="2"/>
<rect x="140" y="92" width="36" height="6" fill="#6a5a4a"/>
</svg>
<svg class="a" style="left:950px;top:774px" width="63" height="67" viewBox="0 0 63 67">
<rect width="63" height="67" fill="#dcdcdc"/>
<rect x="0" y="0" width="63" height="8" fill="#f0f0f0"/>
<rect x="0" y="10" width="63" height="18" fill="#8a8a8a"/>
<rect x="6" y="12" width="16" height="10" fill="#5a5a5a" opacity="0.7"/><rect x="34" y="11" width="20" height="12" fill="#4a4a4a" opacity="0.7"/>
<g fill="#b02a2a"><path d="M0 15l63-7v2.5L0 17z"/><rect x="0" y="25" width="63" height="3"/></g>
<g stroke="#f4f4f4" stroke-width="1.2"><path d="M0 18.5h63M0 24h63M4 12v16M15 12v16M28 11v17M40 10v18M52 9v19M60 9v19"/></g>
<rect x="0" y="28" width="63" height="39" fill="#2152a0"/>
<rect x="0" y="57" width="63" height="1" fill="#184286"/>
<path d="M11 28c1 14 -1 26 -3 39h6c1-12 2-26 1-39zM19 26c0 14 -3 28 -4 41h4c1-12 2-26 1-41z" fill="#c8d8ea" opacity="0.75"/>
</svg>
<svg class="a" style="left:950px;top:845px" width="66" height="68" viewBox="0 0 66 68">
<path d="M25 37c16 1 30 12 38 31H25z" fill="#f6d48e"/>
<path d="M25 37c16 1 30 12 38 31" fill="none" stroke="#d42020" stroke-width="1.2"/>
<path d="M34 42c8 4 14 12 18 26" fill="none" stroke="#d42020" stroke-width="1.6"/>
<rect x="17.4" y="35" width="8" height="33" fill="#d8cab2"/>
<path d="M17.4 35h8" stroke="#d42020" stroke-width="1"/>
<rect x="24.5" y="10.5" width="11.5" height="57.5" fill="#d0dae6"/>
<rect x="24.5" y="10.5" width="1" height="57.5" fill="#c04040"/><rect x="35" y="10.5" width="1" height="57.5" fill="#c04040"/>
<rect x="29.5" y="10.5" width="2" height="57.5" fill="#8a9ab0"/>
<rect x="23" y="1" width="12" height="9.5" rx="2" fill="#a8b2bc"/>
<g fill="#d42020"><rect x="21.7" y="10.5" width="14.5" height="2"/><rect x="21.7" y="24.8" width="14.5" height="2"/></g>
<g fill="#666"><rect x="2" y="13" width="10" height="1"/><rect x="2" y="15.5" width="7" height="1"/><rect x="2" y="24" width="10" height="1"/><rect x="2" y="26.5" width="7" height="1"/><rect x="47" y="27" width="16" height="1"/><rect x="47" y="29.5" width="10" height="1"/><rect x="48" y="33" width="15" height="1"/></g>
<path d="M12 14l12 6M12 25l8 9M36 29h11M36 34h12" stroke="#999" stroke-width="0.4"/>
<path d="M36 11v7h4" fill="none" stroke="#3a6aa8" stroke-width="0.9"/>
</svg>
<div class="a" style="left:2px;top:152px;width:21px;height:19px;background:#dcdcdc"></div>
<div class="a" style="left:4px;top:154px;width:16px;height:15px;background:#fff"></div>
<svg class="a" style="left:4px;top:154px" width="16" height="15"><path d="M6.5 5v6h5" fill="none" stroke="#555" stroke-width="1.6"/></svg>
<div class="a" style="left:105px;top:157px;width:65px;height:10px;background:#c8c8c8"></div>
<div class="a" style="left:170px;top:157px;width:973px;height:10px;background:#fff"></div>
<div class="a" style="left:1144px;top:157px;width:36px;height:10px;background:#c8c8c8"></div>
<svg class="a" style="left:0;top:150px" width="1280" height="30"><g fill="#555"><rect x="106.0" y="12.5" width="1" height="1.2"/><rect x="115.1" y="11.3" width="1" height="4.2"/><rect x="124.1" y="12.5" width="1" height="1.2"/><rect x="142.3" y="12.5" width="1" height="1.2"/><rect x="151.3" y="11.3" width="1" height="4.2"/><rect x="160.4" y="12.5" width="1" height="1.2"/><rect x="178.6" y="12.5" width="1" height="1.2"/><rect x="187.7" y="11.3" width="1" height="4.2"/><rect x="196.7" y="12.5" width="1" height="1.2"/><rect x="214.9" y="12.5" width="1" height="1.2"/><rect x="223.9" y="11.3" width="1" height="4.2"/><rect x="233.0" y="12.5" width="1" height="1.2"/><rect x="251.2" y="12.5" width="1" height="1.2"/><rect x="260.2" y="11.3" width="1" height="4.2"/><rect x="269.3" y="12.5" width="1" height="1.2"/><rect x="287.5" y="12.5" width="1" height="1.2"/><rect x="296.5" y="11.3" width="1" height="4.2"/><rect x="305.6" y="12.5" width="1" height="1.2"/><rect x="323.8" y="12.5" width="1" height="1.2"/><rect x="332.9" y="11.3" width="1" height="4.2"/><rect x="341.9" y="12.5" width="1" height="1.2"/><rect x="360.1" y="12.5" width="1" height="1.2"/><rect x="369.1" y="11.3" width="1" height="4.2"/><rect x="378.2" y="12.5" width="1" height="1.2"/><rect x="396.4" y="12.5" width="1" height="1.2"/><rect x="405.4" y="11.3" width="1" height="4.2"/><rect x="414.5" y="12.5" width="1" height="1.2"/><rect x="432.7" y="12.5" width="1" height="1.2"/><rect x="441.8" y="11.3" width="1" height="4.2"/><rect x="450.8" y="12.5" width="1" height="1.2"/><rect x="469.0" y="12.5" width="1" height="1.2"/><rect x="478.0" y="11.3" width="1" height="4.2"/><rect x="487.1" y="12.5" width="1" height="1.2"/><rect x="505.3" y="12.5" width="1" height="1.2"/><rect x="514.3" y="11.3" width="1" height="4.2"/><rect x="523.4" y="12.5" width="1" height="1.2"/><rect x="541.6" y="12.5" width="1" height="1.2"/><rect x="550.6" y="11.3" width="1" height="4.2"/><rect x="559.7" y="12.5" width="1" height="1.2"/><rect x="577.9" y="12.5" width="1" height="1.2"/><rect x="587.0" y="11.3" width="1" height="4.2"/><rect x="596.0" y="12.5" width="1" height="1.2"/><rect x="614.2" y="12.5" width="1" height="1.2"/><rect x="623.2" y="11.3" width="1" height="4.2"/><rect x="632.3" y="12.5" width="1" height="1.2"/><rect x="650.5" y="12.5" width="1" height="1.2"/><rect x="659.5" y="11.3" width="1" height="4.2"/><rect x="668.6" y="12.5" width="1" height="1.2"/><rect x="686.8" y="12.5" width="1" height="1.2"/><rect x="695.8" y="11.3" width="1" height="4.2"/><rect x="704.9" y="12.5" width="1" height="1.2"/><rect x="723.1" y="12.5" width="1" height="1.2"/><rect x="732.1" y="11.3" width="1" height="4.2"/><rect x="741.2" y="12.5" width="1" height="1.2"/><rect x="759.4" y="12.5" width="1" height="1.2"/><rect x="768.4" y="11.3" width="1" height="4.2"/><rect x="777.5" y="12.5" width="1" height="1.2"/><rect x="795.7" y="12.5" width="1" height="1.2"/><rect x="804.8" y="11.3" width="1" height="4.2"/><rect x="813.8" y="12.5" width="1" height="1.2"/><rect x="832.0" y="12.5" width="1" height="1.2"/><rect x="841.0" y="11.3" width="1" height="4.2"/><rect x="850.1" y="12.5" width="1" height="1.2"/><rect x="868.3" y="12.5" width="1" height="1.2"/><rect x="877.3" y="11.3" width="1" height="4.2"/><rect x="886.4" y="12.5" width="1" height="1.2"/><rect x="904.6" y="12.5" width="1" height="1.2"/><rect x="913.6" y="11.3" width="1" height="4.2"/><rect x="922.7" y="12.5" width="1" height="1.2"/><rect x="940.9" y="12.5" width="1" height="1.2"/><rect x="949.9" y="11.3" width="1" height="4.2"/><rect x="959.0" y="12.5" width="1" height="1.2"/><rect x="977.2" y="12.5" width="1" height="1.2"/><rect x="986.2" y="11.3" width="1" height="4.2"/><rect x="995.3" y="12.5" width="1" height="1.2"/><rect x="1013.5" y="12.5" width="1" height="1.2"/><rect x="1022.5" y="11.3" width="1" height="4.2"/><rect x="1031.6" y="12.5" width="1" height="1.2"/><rect x="1049.8" y="12.5" width="1" height="1.2"/><rect x="1058.8" y="11.3" width="1" height="4.2"/><rect x="1067.9" y="12.5" width="1" height="1.2"/><rect x="1086.1" y="12.5" width="1" height="1.2"/><rect x="1095.2" y="11.3" width="1" height="4.2"/><rect x="1104.2" y="12.5" width="1" height="1.2"/><rect x="1122.4" y="12.5" width="1" height="1.2"/><rect x="1131.4" y="11.3" width="1" height="4.2"/><rect x="1140.5" y="12.5" width="1" height="1.2"/><rect x="1158.7" y="12.5" width="1" height="1.2"/><rect x="1167.8" y="11.3" width="1" height="4.2"/><rect x="1176.8" y="12.5" width="1" height="1.2"/></g><g fill="#444" font-family="Liberation Sans" font-size="9.5"><text x="206.3" y="15.5" text-anchor="middle">1</text><text x="242.6" y="15.5" text-anchor="middle">2</text><text x="278.9" y="15.5" text-anchor="middle">3</text><text x="315.2" y="15.5" text-anchor="middle">4</text><text x="351.5" y="15.5" text-anchor="middle">5</text><text x="387.8" y="15.5" text-anchor="middle">6</text><text x="424.1" y="15.5" text-anchor="middle">7</text><text x="460.4" y="15.5" text-anchor="middle">8</text><text x="496.7" y="15.5" text-anchor="middle">9</text><text x="533.0" y="15.5" text-anchor="middle">10</text><text x="569.3" y="15.5" text-anchor="middle">11</text><text x="605.6" y="15.5" text-anchor="middle">12</text><text x="641.9" y="15.5" text-anchor="middle">13</text><text x="678.2" y="15.5" text-anchor="middle">14</text><text x="714.5" y="15.5" text-anchor="middle">15</text><text x="750.8" y="15.5" text-anchor="middle">16</text><text x="787.1" y="15.5" text-anchor="middle">17</text><text x="823.4" y="15.5" text-anchor="middle">18</text><text x="859.7" y="15.5" text-anchor="middle">19</text><text x="896.0" y="15.5" text-anchor="middle">20</text><text x="932.3" y="15.5" text-anchor="middle">21</text><text x="968.6" y="15.5" text-anchor="middle">22</text><text x="1004.9" y="15.5" text-anchor="middle">23</text><text x="1041.2" y="15.5" text-anchor="middle">24</text><text x="1077.5" y="15.5" text-anchor="middle">25</text><text x="1113.8" y="15.5" text-anchor="middle">26</text><text x="133.7" y="15.5" text-anchor="middle">1</text></g><path d="M166.5 4.5h7v1l-3.5 5.5 3.5 5.5v0.5h-7v-0.5l3.5-5.5-3.5-5.5z" fill="#fff" stroke="#777"/><rect x="166.5" y="16.5" width="7" height="9" fill="#fff" stroke="#777"/><path d="M1117.5 20.5v-3l4-4 4 4v3z" fill="#fff" stroke="#777"/></svg>
<div class="a" style="left:5px;top:191px;width:11px;height:26px;background:#c8c8c8"></div>
<div class="a" style="left:5px;top:217px;width:11px;height:724px;background:#fff"></div>
<div class="a" style="left:5px;top:941px;width:11px;height:13px;background:#c8c8c8"></div>
<svg class="a" style="left:0;top:0" width="20" height="960"><g fill="#555"><rect x="11" y="225.6" width="1.2" height="1"/><rect x="9.5" y="234.7" width="4.2" height="1"/><rect x="11" y="243.7" width="1.2" height="1"/><rect x="11" y="261.9" width="1.2" height="1"/><rect x="9.5" y="270.9" width="4.2" height="1"/><rect x="11" y="280.0" width="1.2" height="1"/><rect x="11" y="298.2" width="1.2" height="1"/><rect x="9.5" y="307.2" width="4.2" height="1"/><rect x="11" y="316.3" width="1.2" height="1"/><rect x="11" y="334.5" width="1.2" height="1"/><rect x="9.5" y="343.5" width="4.2" height="1"/><rect x="11" y="352.6" width="1.2" height="1"/><rect x="11" y="370.8" width="1.2" height="1"/><rect x="9.5" y="379.9" width="4.2" height="1"/><rect x="11" y="388.9" width="1.2" height="1"/><rect x="11" y="407.1" width="1.2" height="1"/><rect x="9.5" y="416.1" width="4.2" height="1"/><rect x="11" y="425.2" width="1.2" height="1"/><rect x="11" y="443.4" width="1.2" height="1"/><rect x="9.5" y="452.4" width="4.2" height="1"/><rect x="11" y="461.5" width="1.2" height="1"/><rect x="11" y="479.7" width="1.2" height="1"/><rect x="9.5" y="488.8" width="4.2" height="1"/><rect x="11" y="497.8" width="1.2" height="1"/><rect x="11" y="516.0" width="1.2" height="1"/><rect x="9.5" y="525.0" width="4.2" height="1"/><rect x="11" y="534.1" width="1.2" height="1"/><rect x="11" y="552.3" width="1.2" height="1"/><rect x="9.5" y="561.3" width="4.2" height="1"/><rect x="11" y="570.4" width="1.2" height="1"/><rect x="11" y="588.6" width="1.2" height="1"/><rect x="9.5" y="597.6" width="4.2" height="1"/><rect x="11" y="606.7" width="1.2" height="1"/><rect x="11" y="624.9" width="1.2" height="1"/><rect x="9.5" y="634.0" width="4.2" height="1"/><rect x="11" y="643.0" width="1.2" height="1"/><rect x="11" y="661.2" width="1.2" height="1"/><rect x="9.5" y="670.2" width="4.2" height="1"/><rect x="11" y="679.3" width="1.2" height="1"/><rect x="11" y="697.5" width="1.2" height="1"/><rect x="9.5" y="706.5" width="4.2" height="1"/><rect x="11" y="715.6" width="1.2" height="1"/><rect x="11" y="733.8" width="1.2" height="1"/><rect x="9.5" y="742.8" width="4.2" height="1"/><rect x="11" y="751.9" width="1.2" height="1"/><rect x="11" y="770.1" width="1.2" height="1"/><rect x="9.5" y="779.1" width="4.2" height="1"/><rect x="11" y="788.2" width="1.2" height="1"/><rect x="11" y="806.4" width="1.2" height="1"/><rect x="9.5" y="815.4" width="4.2" height="1"/><rect x="11" y="824.5" width="1.2" height="1"/><rect x="11" y="842.7" width="1.2" height="1"/><rect x="9.5" y="851.8" width="4.2" height="1"/><rect x="11" y="860.8" width="1.2" height="1"/><rect x="11" y="879.0" width="1.2" height="1"/><rect x="9.5" y="888.0" width="4.2" height="1"/><rect x="11" y="897.1" width="1.2" height="1"/><rect x="11" y="915.3" width="1.2" height="1"/><rect x="9.5" y="924.3" width="4.2" height="1"/><rect x="11" y="933.4" width="1.2" height="1"/><rect x="11" y="951.6" width="1.2" height="1"/></g><g fill="#444" font-family="Liberation Sans" font-size="9.5"><text transform="translate(15 253.3) rotate(-90)" text-anchor="middle">1</text><text transform="translate(15 289.6) rotate(-90)" text-anchor="middle">2</text><text transform="translate(15 325.9) rotate(-90)" text-anchor="middle">3</text><text transform="translate(15 362.2) rotate(-90)" text-anchor="middle">4</text><text transform="translate(15 398.5) rotate(-90)" text-anchor="middle">5</text><text transform="translate(15 434.8) rotate(-90)" text-anchor="middle">6</text><text transform="translate(15 471.1) rotate(-90)" text-anchor="middle">7</text><text transform="translate(15 507.4) rotate(-90)" text-anchor="middle">8</text><text transform="translate(15 543.7) rotate(-90)" text-anchor="middle">9</text><text transform="translate(15 580.0) rotate(-90)" text-anchor="middle">10</text><text transform="translate(15 616.3) rotate(-90)" text-anchor="middle">11</text><text transform="translate(15 652.6) rotate(-90)" text-anchor="middle">12</text><text transform="translate(15 688.9) rotate(-90)" text-anchor="middle">13</text><text transform="translate(15 725.2) rotate(-90)" text-anchor="middle">14</text><text transform="translate(15 761.5) rotate(-90)" text-anchor="middle">15</text><text transform="translate(15 797.8) rotate(-90)" text-anchor="middle">16</text><text transform="translate(15 834.1) rotate(-90)" text-anchor="middle">17</text><text transform="translate(15 870.4) rotate(-90)" text-anchor="middle">18</text><text transform="translate(15 906.7) rotate(-90)" text-anchor="middle">19</text></g></svg>
<div class="a" style="left:1263px;top:152px;width:17px;height:810px;background:#dedede"></div>
<div class="a" style="left:1264px;top:154px;width:15px;height:15px;background:#fff;border:1px solid #ababab"></div>
<svg class="a" style="left:1264px;top:154px" width="15" height="15"><path d="M3.5 9.5l4-4 4 4z" fill="#606060"/></svg>
<div class="a" style="left:1264px;top:170px;width:15px;height:27px;background:#fff;border:1px solid #ababab"></div>
<div class="a" style="left:1264px;top:945px;width:15px;height:15px;background:#fff;border:1px solid #ababab"></div>
<svg class="a" style="left:1264px;top:945px" width="15" height="15"><path d="M3.5 5.5l4 4 4-4z" fill="#606060"/></svg>
<div class="a" style="left:0;top:962px;width:1280px;height:22px;background:#f1f1f1;border-top:1px solid #d6d6d6"></div>
<div class="u" style="left:8px;top:966px;font-size:11.2px;color:#444">Страница 1 из 28</div>
<div class="u" style="left:135px;top:966px;font-size:11.2px;color:#444">русский</div>
<svg class="a" style="left:190px;top:962px" width="30" height="22"><circle cx="10" cy="7" r="3" fill="#666"/><rect x="9.5" y="8.5" width="10" height="8" fill="#fff" stroke="#666"/><path d="M11 11.5h7M11 14h7M14 9v7" stroke="#666"/></svg>
<div class="a" style="left:1026px;top:963px;width:38px;height:21px;background:#d4d4d4"></div>
<svg class="a" style="left:990px;top:962px" width="290" height="22">
  <g fill="none" stroke="#555">
   <path d="M10.5 5.5h6l1 1 1-1h6v11h-6l-1 1-1-1h-6z"/><path d="M17.5 6.5v10M12 8.5h4M12 10.5h4M12 12.5h4M20 8.5h4M20 10.5h4M20 12.5h4"/>
   <rect x="47.5" y="5.5" width="14" height="11"/><path d="M50 8.5h9M50 10.5h9M50 12.5h9M50 14.5h9"/>
   <rect x="86.5" y="5.5" width="13" height="10"/><path d="M88 8.5h7M88 10.5h5"/><circle cx="98" cy="15" r="3.5" fill="#f1f1f1"/>
   <path d="M117.5 10.5h5" stroke-width="2"/><path d="M127 10.5h101" stroke="#999"/><path d="M232 10.5h8M236 6.5v8" stroke-width="2"/>
  </g>
  <rect x="173.5" y="5" width="3.5" height="11" fill="#444"/>
</svg>
<div class="u" style="left:1244px;top:966px;font-size:11.2px;color:#444">96%</div>
<div class="a" style="left:0;top:984px;width:1280px;height:40px;background:#1d2024"></div>
<div class="a" style="left:266px;top:984px;width:48px;height:40px;background:#404247"></div>
<div class="a" style="left:123px;top:1021px;width:40px;height:3px;background:#76b9ed"></div>
<div class="a" style="left:172px;top:1021px;width:40px;height:3px;background:#76b9ed"></div>
<div class="a" style="left:221px;top:1021px;width:40px;height:3px;background:#76b9ed"></div>
<div class="a" style="left:266px;top:1021px;width:48px;height:3px;background:#76b9ed"></div>
<svg class="a" style="left:0;top:984px" width="330" height="40">
  <g fill="#fff"><path d="M16 13.5l7-1v7h-7z"/><path d="M24 12.3l8-1.3v8.5h-8z"/><path d="M16 20.5h7v7l-7-1z"/><path d="M24 20.5h8v8.5l-8-1.2z"/></g>
  <g fill="none" stroke="#fff" stroke-width="1.4"><circle cx="75" cy="17" r="5.5"/><path d="M71 21l-6 7"/></g>
  <path d="M102.5 11v17M105.5 11v17" stroke="#777" stroke-width="1"/>
  <circle cx="143" cy="19" r="11" fill="#e9e9e9"/>
  <path d="M137 12l6 7 6-7M143 19v8" fill="none" stroke="#e41f26" stroke-width="2.4"/>
  <circle cx="192" cy="19" r="12" fill="#76b83f"/>
  <circle cx="192" cy="19" r="12" fill="none" stroke="#5a9a2a" stroke-width="1"/>
  <text x="192" y="26" text-anchor="middle" font-family="Liberation Serif" font-size="20" font-weight="bold" fill="#fff">μ</text>
  <path d="M230 12h8l2 2h11v16h-21z" fill="#f2c34a"/>
  <rect x="230" y="16" width="21" height="14" fill="#f8d36a"/>
  <path d="M235 30v-7h11v7h-3v-4h-5v4z" fill="#2d86d6"/>
  <path d="M286 9h15v21h-15z" fill="#fff"/>
  <path d="M288 12h11M288 15h11M288 18h11M288 21h11M288 24h11M288 27h11" stroke="#2b579a" stroke-width="1"/>
  <path d="M278 11l13-2v23l-13-2z" fill="#2b579a"/>
  <text x="284.5" y="24" text-anchor="middle" font-family="Liberation Sans" font-size="9" font-weight="bold" fill="#fff">W</text>
</svg>
<svg class="a" style="left:980px;top:984px" width="300" height="40">
  <path d="M14.5 11v17M17.5 11v17" stroke="#666" stroke-width="1"/>
  <g fill="none" stroke="#fff" stroke-width="1.2">
   <path d="M76 22l5.5-6 5.5 6"/>
   <path d="M97.5 15.5h3l5-4v16l-5-4h-3z"/><path d="M107.5 17.5l4 4M111.5 17.5l-4 4"/>
   <path d="M122 20l6-1 3-6c1-1 2-1 2 0l-1 6 5 1 2-2h1l-1 4 1 4h-1l-2-2-5 1 1 6c0 1-1 1-2 0l-3-6-6-1z" stroke-width="1.1"/>
   <rect x="145.5" y="13.5" width="22" height="13"/>
   <path d="M148 17h17M148 19.5h17M148 22h17" stroke-dasharray="1.2 0.9"/><path d="M150 24.5h13"/>
   <path d="M259.5 13.5h15v11h-5l-2.5 2.5-2.5-2.5h-5z"/>
  </g>
</svg>
<div class="u" style="left:1012px;top:996px;font-size:11.5px;color:#fff">EN</div>
<div class="u" style="left:1167px;top:989px;font-size:12px;color:#fff">18:30:07</div>
<div class="u" style="left:1159px;top:1008px;font-size:12px;color:#fff">05.08.2023</div>
<div class="a" style="left:1038px;top:767px;width:216px;height:112px;background:#fff;border:1px solid #3e6bb0;box-shadow:0 2px 6px rgba(0,0,0,0.18)"></div>
<svg class="a" style="left:1250px;top:812px" width="16" height="24"><path d="M3 3l9.5 9.5L3 22" fill="#fff" stroke="#3e6bb0" stroke-width="1"/><rect x="0" y="3.5" width="3.5" height="18" fill="#fff"/></svg>
<div class="u" style="left:1051px;top:780px;font-size:15px;color:#262626">С возвращением!</div>
<div class="u" style="left:1051px;top:803px;font-size:12px;color:#444">Начните с того места, на котором</div>
<div class="u" style="left:1051px;top:819px;font-size:12px;color:#444">остановились:</div>
<div class="u" style="left:1051px;top:854px;font-size:12px;color:#444">19 мин. назад</div>
<svg class="a" style="left:0;top:0;pointer-events:none" width="1280" height="1024">
<defs><clipPath id="lowc"><rect x="0" y="930" width="1280" height="100"/></clipPath></defs>
<g opacity="0.63">
<g fill="none" stroke="rgb(18,118,178)" stroke-width="2.6" stroke-linejoin="round"><path d="M240.5 879.8L241.0 888.7C241.0 888.7 236.6 888.9 234.7 889.8C232.8 890.7 230.7 892.4 229.7 894.3C228.7 896.2 228.1 898.8 228.6 901.0C229.1 903.2 230.2 905.7 232.5 907.6C234.8 909.5 238.6 910.7 242.5 912.6C246.4 914.5 251.8 916.5 255.9 918.8C260.0 921.1 264.0 923.8 267.0 926.6C270.0 929.4 272.0 932.0 273.7 935.5C275.4 939.0 276.9 943.6 277.1 947.7C277.3 951.8 276.9 955.9 274.8 960.0C272.8 964.1 268.9 969.1 264.8 972.2C260.7 975.4 254.7 977.5 250.3 978.9C245.9 980.3 238.6 980.6 238.6 980.6L238.1 970.0C238.1 970.0 245.2 968.4 247.0 966.7C248.8 965.0 249.6 962.4 249.2 960.0C248.8 957.6 247.2 954.6 244.8 952.2C242.4 949.8 238.4 947.7 234.7 945.5C231.0 943.3 226.2 941.4 222.5 938.8C218.8 936.2 215.2 932.9 212.5 929.9C209.8 926.9 207.7 924.5 206.4 921.0C205.1 917.5 204.2 913.0 204.5 908.7C204.8 904.4 205.8 899.5 208.0 895.4C210.2 891.3 214.3 886.7 218.0 884.2C221.7 881.7 226.2 881.2 230.0 880.5C233.8 879.8 240.5 879.8 240.5 879.8Z"/><path d="M242.5 879.8C242.5 879.8 255.5 882.4 259.2 882.6C262.9 882.8 262.9 881.2 264.8 880.9C266.7 880.6 269.2 880.3 270.4 880.9C271.6 881.5 271.7 879.0 272.0 884.2C272.3 889.4 272.6 907.1 272.0 912.1C271.4 917.1 269.4 914.3 268.2 914.3C267.0 914.3 265.9 913.8 264.8 912.1C263.7 910.4 263.0 906.9 261.5 904.3C260.0 901.7 257.9 898.6 255.9 896.5C253.8 894.4 251.4 892.8 249.2 891.5C247.0 890.2 242.5 888.7 242.5 888.7L242.5 879.8Z"/><path d="M235.9 980.6C235.9 980.6 224.4 977.0 220.3 976.7C216.2 976.4 213.9 978.9 211.4 978.9C208.9 978.9 206.4 978.2 205.2 976.7C204.0 975.2 204.3 975.2 204.1 970.0C203.9 964.8 203.3 950.2 204.1 945.5C204.9 940.8 207.5 941.8 209.1 941.6C210.7 941.4 212.3 942.6 213.6 944.4C214.9 946.2 215.2 949.1 216.9 952.2C218.6 955.4 221.2 960.5 223.6 963.3C226.0 966.1 229.3 967.8 231.4 968.9C233.5 970.0 235.9 970.0 235.9 970.0L235.9 980.6Z"/><path d="M279.5 881.5L319.0 881.5L319.0 978.5C319.0 978.5 287.8 979.5 281.0 978.9C274.2 978.3 278.6 976.4 278.4 975.0C278.1 973.6 278.7 971.6 279.5 970.5C280.3 969.4 281.8 969.0 283.0 968.5C284.2 968.0 286.7 967.8 286.7 967.8L286.7 892.0C286.7 892.0 284.3 891.2 283.0 890.5C281.7 889.8 279.8 889.1 279.0 888.0C278.2 886.9 278.3 885.1 278.4 884.0C278.5 882.9 279.5 881.5 279.5 881.5Z"/><path d="M312.0 881.5L353.5 881.5C353.5 881.5 354.1 904.7 353.5 909.9C352.9 915.1 351.3 912.4 350.2 912.6C349.1 912.8 347.7 912.8 346.8 911.0C345.9 909.2 345.9 904.9 344.6 902.1C343.3 899.3 341.0 896.1 339.0 894.3C337.0 892.5 336.9 892.1 332.4 891.5C327.9 890.9 312.0 890.9 312.0 890.9L312.0 881.5Z"/><path d="M312.0 924.3C312.0 924.3 320.7 924.8 323.5 924.3C326.3 923.8 327.5 922.7 329.0 921.0C330.5 919.3 331.3 916.1 332.4 914.3C333.5 912.4 334.6 910.5 335.7 909.9C336.8 909.2 338.1 909.7 339.0 910.4C339.9 911.1 340.9 908.6 341.3 914.3C341.7 920.0 341.7 938.6 341.3 944.4C340.9 950.1 339.9 948.1 339.0 948.8C338.1 949.5 337.0 949.9 335.7 948.8C334.4 947.7 332.5 944.2 331.2 942.2C329.9 940.2 331.1 937.9 327.9 936.6C324.7 935.3 312.0 934.4 312.0 934.4L312.0 924.3Z"/><path d="M312.0 968.9C312.0 968.9 328.6 968.0 333.5 966.7C338.4 965.4 339.1 963.9 341.3 961.1C343.5 958.3 345.3 952.2 346.8 950.0C348.3 947.8 349.1 947.9 350.2 947.7C351.3 947.5 352.7 947.7 353.5 948.8C354.3 949.9 354.9 951.2 355.2 954.4C355.5 957.6 355.2 967.8 355.2 967.8L355.7 978.3L312.0 978.3L312.0 968.9Z"/><path d="M383.7 881.4L413.7 881.4L434.0 967.0C434.0 967.0 438.2 967.8 439.5 969.0C440.8 970.2 441.7 972.4 441.7 974.0C441.7 975.6 440.8 977.9 439.5 978.8C438.2 979.7 434.0 979.2 434.0 979.2L398.0 979.2C398.0 979.2 394.0 977.5 393.5 976.0C393.0 974.5 394.1 971.9 395.0 970.5C395.9 969.1 399.0 967.5 399.0 967.5L383.7 881.4Z"/><path d="M379.9 899.2L383.0 902.0L372.5 962.0C372.5 962.0 375.7 966.2 377.0 968.0C378.3 969.8 380.1 971.2 380.4 973.0C380.7 974.8 380.1 977.5 379.0 978.5C377.9 979.5 374.0 979.2 374.0 979.2L349.0 979.2C349.0 979.2 345.7 976.6 345.5 975.0C345.3 973.4 346.4 970.8 348.0 969.5C349.6 968.2 355.0 967.4 355.0 967.4L360.0 964.0L377.5 901.0L379.9 899.2Z"/><path d="M377.2 944.3L394.4 944.3L394.4 955.0L377.2 955.0L377.2 944.3Z"/><path d="M435.0 881.3L456.0 881.3C456.0 881.3 456.0 887.3 454.9 889.3C453.8 891.3 451.4 891.2 449.6 893.2C447.8 895.2 445.6 898.1 444.3 901.2C443.0 904.3 442.5 909.2 441.6 911.8C440.7 914.3 440.0 916.0 439.0 916.5C438.0 917.0 436.4 915.5 435.7 914.5C435.0 913.5 435.1 916.0 435.0 910.5C434.9 905.0 435.0 881.3 435.0 881.3Z"/><path d="M458.9 881.3L492.8 881.3L492.8 967.0C492.8 967.0 497.3 967.7 498.7 968.9C500.1 970.1 501.2 972.7 501.4 974.3C501.6 975.9 500.9 977.5 500.0 978.3C499.1 979.1 496.0 978.9 496.0 978.9L455.0 978.9C455.0 978.9 450.0 976.0 449.6 974.3C449.2 972.6 451.3 970.1 452.9 968.9C454.4 967.7 458.9 967.0 458.9 967.0L458.9 881.3Z"/><path d="M495.0 881.3L516.0 881.3C516.0 881.3 516.5 904.1 516.0 910.0C515.5 915.9 514.2 915.7 513.0 916.5C511.8 917.3 510.2 916.9 509.0 915.0C507.8 913.1 507.2 908.3 506.0 905.0C504.8 901.7 503.5 897.4 502.0 895.0C500.5 892.6 498.2 892.8 497.0 890.5C495.8 888.2 495.0 881.3 495.0 881.3Z"/><path d="M516.0 881.1L556.0 881.1L556.0 968.0C556.0 968.0 559.5 968.5 561.0 969.5C562.5 970.5 564.5 972.5 565.0 974.0C565.5 975.5 564.8 977.8 564.0 978.6C563.2 979.4 560.0 978.6 560.0 978.6L520.0 978.6C520.0 978.6 515.9 975.5 515.7 974.0C515.5 972.5 517.7 970.5 519.0 969.5C520.3 968.5 523.3 968.0 523.3 968.0L523.3 892.0C523.3 892.0 520.2 891.0 519.0 890.0C517.8 889.0 516.5 887.5 516.0 886.0C515.5 884.5 516.0 881.1 516.0 881.1Z"/><path d="M559.8 881.1C559.8 881.1 572.0 880.6 577.0 881.1C582.0 881.6 586.5 882.2 590.0 884.0C593.5 885.8 596.2 888.7 598.0 892.0C599.8 895.3 600.8 900.0 601.0 904.0C601.2 908.0 600.7 912.3 599.0 916.0C597.3 919.7 594.5 923.6 591.0 926.0C587.5 928.4 583.2 929.8 578.0 930.5C572.8 931.2 559.8 930.5 559.8 930.5C559.8 930.5 558.8 926.4 559.8 925.0C560.8 923.6 564.3 923.3 566.0 922.0C567.7 920.7 569.3 921.5 570.0 917.0C570.7 912.5 570.7 899.5 570.0 895.0C569.3 890.5 567.7 891.3 566.0 890.0C564.3 888.7 560.8 888.5 559.8 887.0C558.8 885.5 559.8 881.1 559.8 881.1Z"/><path d="M559.8 930.0C559.8 930.0 573.0 929.5 578.0 930.0C583.0 930.5 586.7 931.3 590.0 933.0C593.3 934.7 596.2 937.2 598.0 940.0C599.8 942.8 600.5 947.0 601.0 950.0C601.5 953.0 600.7 956.0 601.0 958.0C601.3 960.0 601.8 961.6 603.0 962.0C604.2 962.4 606.5 960.2 608.0 960.5C609.5 960.8 611.5 962.2 612.0 964.0C612.5 965.8 612.3 968.8 611.0 971.0C609.7 973.2 607.2 975.5 604.0 977.0C600.8 978.5 596.0 979.5 592.0 980.0C588.0 980.5 583.3 980.5 580.0 980.0C576.7 979.5 573.8 978.7 572.0 977.0C570.2 975.3 569.5 976.2 569.0 970.0C568.5 963.8 570.5 945.5 569.0 940.0C567.5 934.5 559.8 937.0 559.8 937.0L559.8 930.0Z"/><path d="M383.7 881.4L413.7 881.4L434.0 967.0C434.0 967.0 438.2 967.8 439.5 969.0C440.8 970.2 441.7 972.4 441.7 974.0C441.7 975.6 440.8 977.9 439.5 978.8C438.2 979.7 434.0 979.2 434.0 979.2L398.0 979.2C398.0 979.2 394.0 977.5 393.5 976.0C393.0 974.5 394.1 971.9 395.0 970.5C395.9 969.1 399.0 967.5 399.0 967.5L383.7 881.4Z" transform="translate(259.60 0) translate(349.00 0) scale(0.9300 1) translate(-349.00 0)"/><path d="M379.9 899.2L383.0 902.0L372.5 962.0C372.5 962.0 375.7 966.2 377.0 968.0C378.3 969.8 380.1 971.2 380.4 973.0C380.7 974.8 380.1 977.5 379.0 978.5C377.9 979.5 374.0 979.2 374.0 979.2L349.0 979.2C349.0 979.2 345.7 976.6 345.5 975.0C345.3 973.4 346.4 970.8 348.0 969.5C349.6 968.2 355.0 967.4 355.0 967.4L360.0 964.0L377.5 901.0L379.9 899.2Z" transform="translate(259.60 0) translate(349.00 0) scale(0.9300 1) translate(-349.00 0)"/><path d="M377.2 944.3L394.4 944.3L394.4 955.0L377.2 955.0L377.2 944.3Z" transform="translate(259.60 0) translate(349.00 0) scale(0.9300 1) translate(-349.00 0)"/><path d="M731.8 879.3L731.8 888.0C731.8 888.0 728.0 888.8 726.5 890.0C725.0 891.2 723.6 892.5 723.0 895.0C722.4 897.5 722.8 895.0 722.7 905.0C722.7 915.0 722.5 945.2 722.7 955.0C722.9 964.8 723.1 961.7 724.0 964.0C724.9 966.3 726.7 967.9 728.0 969.0C729.3 970.1 731.8 970.5 731.8 970.5L731.8 980.5C731.8 980.5 717.8 979.4 712.0 977.0C706.2 974.6 700.7 970.5 697.0 966.0C693.3 961.5 691.4 956.0 690.0 950.0C688.6 944.0 688.2 936.7 688.4 930.0C688.6 923.3 689.2 916.2 691.0 910.0C692.8 903.8 695.3 897.5 699.0 893.0C702.7 888.5 707.5 885.3 713.0 883.0C718.5 880.7 731.8 879.3 731.8 879.3Z"/><path d="M735.6 879.3C735.6 879.3 742.1 880.9 745.0 882.0C747.9 883.1 750.6 885.9 753.0 885.7C755.4 885.6 757.2 882.0 759.2 881.1C761.2 880.2 764.0 879.6 765.3 880.4C766.6 881.2 766.5 880.0 766.8 885.7C767.0 891.4 767.5 909.0 766.8 914.7C766.0 920.4 763.8 919.8 762.3 920.0C760.8 920.2 759.2 919.1 757.7 916.2C756.2 913.3 755.1 906.3 753.1 902.5C751.1 898.7 748.4 895.6 745.5 893.3C742.6 891.0 735.6 888.8 735.6 888.8L735.6 879.3Z"/><path d="M735.6 980.5L735.6 969.5C735.6 969.5 745.2 966.2 748.6 963.4C752.0 960.6 753.9 955.1 756.2 952.7C758.5 950.3 760.4 948.6 762.3 948.9C764.2 949.2 767.1 951.4 767.6 954.3C768.1 957.2 767.7 962.7 765.3 966.5C762.9 970.3 758.0 974.8 753.1 977.1C748.2 979.4 735.6 980.5 735.6 980.5Z"/><path d="M771.0 881.9C778.6 881.1 807.8 881.1 815.5 881.9C823.2 882.7 817.4 885.1 817.1 886.5C816.9 887.9 815.0 889.6 814.0 890.5C813.0 891.4 811.0 892.0 811.0 892.0L811.0 968.0C811.0 968.0 813.0 968.6 814.0 969.5C815.0 970.4 816.9 972.0 817.1 973.5C817.4 975.0 823.2 977.8 815.5 978.6C807.8 979.5 778.6 979.4 771.0 978.6C763.4 977.8 769.6 975.5 769.9 974.0C770.2 972.5 771.7 970.5 773.0 969.5C774.3 968.5 777.5 968.0 777.5 968.0L777.5 892.0C777.5 892.0 774.3 891.4 773.0 890.5C771.7 889.6 770.2 887.9 769.9 886.5C769.6 885.1 763.4 882.7 771.0 881.9Z"/><path d="M826.2 881.9C826.2 881.9 855.3 881.0 861.3 881.9C867.3 882.8 862.4 885.6 862.0 887.0C861.6 888.4 860.7 889.5 859.0 890.5C857.3 891.5 854.4 891.5 852.0 893.0C849.6 894.5 847.0 896.7 844.5 899.4C842.0 902.1 842.1 903.5 836.9 909.3C831.6 915.1 813.0 934.0 813.0 934.0L811.0 918.0C811.0 918.0 829.3 897.7 832.0 893.0C834.7 888.3 828.1 891.2 827.0 890.0C825.9 888.8 825.6 886.9 825.5 885.5C825.4 884.1 826.2 881.9 826.2 881.9Z"/><path d="M812.5 932.2L838.4 912.4L861.3 969.5C861.3 969.5 864.6 970.4 865.5 971.5C866.4 972.6 866.9 974.8 866.6 976.0C866.4 977.2 864.0 978.6 864.0 978.6L820.0 978.6C820.0 978.6 817.7 975.9 817.5 974.5C817.3 973.1 818.0 971.3 819.0 970.5C820.0 969.7 823.2 969.5 823.2 969.5L811.0 937.0L812.5 932.2Z"/><path d="M279.5 881.5L319.0 881.5L319.0 978.5C319.0 978.5 287.8 979.5 281.0 978.9C274.2 978.3 278.6 976.4 278.4 975.0C278.1 973.6 278.7 971.6 279.5 970.5C280.3 969.4 281.8 969.0 283.0 968.5C284.2 968.0 286.7 967.8 286.7 967.8L286.7 892.0C286.7 892.0 284.3 891.2 283.0 890.5C281.7 889.8 279.8 889.1 279.0 888.0C278.2 886.9 278.3 885.1 278.4 884.0C278.5 882.9 279.5 881.5 279.5 881.5Z" transform="translate(588.60 0) translate(0.00 0) scale(1.0000 1) translate(-0.00 0)"/><path d="M312.0 881.5L353.5 881.5C353.5 881.5 354.1 904.7 353.5 909.9C352.9 915.1 351.3 912.4 350.2 912.6C349.1 912.8 347.7 912.8 346.8 911.0C345.9 909.2 345.9 904.9 344.6 902.1C343.3 899.3 341.0 896.1 339.0 894.3C337.0 892.5 336.9 892.1 332.4 891.5C327.9 890.9 312.0 890.9 312.0 890.9L312.0 881.5Z" transform="translate(588.60 0) translate(0.00 0) scale(1.0000 1) translate(-0.00 0)"/><path d="M312.0 924.3C312.0 924.3 320.7 924.8 323.5 924.3C326.3 923.8 327.5 922.7 329.0 921.0C330.5 919.3 331.3 916.1 332.4 914.3C333.5 912.4 334.6 910.5 335.7 909.9C336.8 909.2 338.1 909.7 339.0 910.4C339.9 911.1 340.9 908.6 341.3 914.3C341.7 920.0 341.7 938.6 341.3 944.4C340.9 950.1 339.9 948.1 339.0 948.8C338.1 949.5 337.0 949.9 335.7 948.8C334.4 947.7 332.5 944.2 331.2 942.2C329.9 940.2 331.1 937.9 327.9 936.6C324.7 935.3 312.0 934.4 312.0 934.4L312.0 924.3Z" transform="translate(588.60 0) translate(0.00 0) scale(1.0000 1) translate(-0.00 0)"/><path d="M312.0 968.9C312.0 968.9 328.6 968.0 333.5 966.7C338.4 965.4 339.1 963.9 341.3 961.1C343.5 958.3 345.3 952.2 346.8 950.0C348.3 947.8 349.1 947.9 350.2 947.7C351.3 947.5 352.7 947.7 353.5 948.8C354.3 949.9 354.9 951.2 355.2 954.4C355.5 957.6 355.2 967.8 355.2 967.8L355.7 978.3L312.0 978.3L312.0 968.9Z" transform="translate(588.60 0) translate(0.00 0) scale(1.0000 1) translate(-0.00 0)"/><path d="M516.0 881.1L556.0 881.1L556.0 968.0C556.0 968.0 559.5 968.5 561.0 969.5C562.5 970.5 564.5 972.5 565.0 974.0C565.5 975.5 564.8 977.8 564.0 978.6C563.2 979.4 560.0 978.6 560.0 978.6L520.0 978.6C520.0 978.6 515.9 975.5 515.7 974.0C515.5 972.5 517.7 970.5 519.0 969.5C520.3 968.5 523.3 968.0 523.3 968.0L523.3 892.0C523.3 892.0 520.2 891.0 519.0 890.0C517.8 889.0 516.5 887.5 516.0 886.0C515.5 884.5 516.0 881.1 516.0 881.1Z" transform="translate(428.00 0) translate(0.00 0) scale(1.0000 1) translate(-0.00 0)"/><path d="M559.8 881.1C559.8 881.1 572.0 880.6 577.0 881.1C582.0 881.6 586.5 882.2 590.0 884.0C593.5 885.8 596.2 888.7 598.0 892.0C599.8 895.3 600.8 900.0 601.0 904.0C601.2 908.0 600.7 912.3 599.0 916.0C597.3 919.7 594.5 923.6 591.0 926.0C587.5 928.4 583.2 929.8 578.0 930.5C572.8 931.2 559.8 930.5 559.8 930.5C559.8 930.5 558.8 926.4 559.8 925.0C560.8 923.6 564.3 923.3 566.0 922.0C567.7 920.7 569.3 921.5 570.0 917.0C570.7 912.5 570.7 899.5 570.0 895.0C569.3 890.5 567.7 891.3 566.0 890.0C564.3 888.7 560.8 888.5 559.8 887.0C558.8 885.5 559.8 881.1 559.8 881.1Z" transform="translate(428.00 0) translate(0.00 0) scale(1.0000 1) translate(-0.00 0)"/><path d="M559.8 930.0C559.8 930.0 573.0 929.5 578.0 930.0C583.0 930.5 586.7 931.3 590.0 933.0C593.3 934.7 596.2 937.2 598.0 940.0C599.8 942.8 600.5 947.0 601.0 950.0C601.5 953.0 600.7 956.0 601.0 958.0C601.3 960.0 601.8 961.6 603.0 962.0C604.2 962.4 606.5 960.2 608.0 960.5C609.5 960.8 611.5 962.2 612.0 964.0C612.5 965.8 612.3 968.8 611.0 971.0C609.7 973.2 607.2 975.5 604.0 977.0C600.8 978.5 596.0 979.5 592.0 980.0C588.0 980.5 583.3 980.5 580.0 980.0C576.7 979.5 573.8 978.7 572.0 977.0C570.2 975.3 569.5 976.2 569.0 970.0C568.5 963.8 570.5 945.5 569.0 940.0C567.5 934.5 559.8 937.0 559.8 937.0L559.8 930.0Z" transform="translate(428.00 0) translate(0.00 0) scale(1.0000 1) translate(-0.00 0)"/><path d="M516.0 881.1L556.0 881.1L556.0 968.0C556.0 968.0 559.5 968.5 561.0 969.5C562.5 970.5 564.5 972.5 565.0 974.0C565.5 975.5 564.8 977.8 564.0 978.6C563.2 979.4 560.0 978.6 560.0 978.6L520.0 978.6C520.0 978.6 515.9 975.5 515.7 974.0C515.5 972.5 517.7 970.5 519.0 969.5C520.3 968.5 523.3 968.0 523.3 968.0L523.3 892.0C523.3 892.0 520.2 891.0 519.0 890.0C517.8 889.0 516.5 887.5 516.0 886.0C515.5 884.5 516.0 881.1 516.0 881.1Z" transform="translate(561.30 0) translate(0.00 0) scale(1.0000 1) translate(-0.00 0)"/><path d="M559.8 881.1C559.8 881.1 572.0 880.6 577.0 881.1C582.0 881.6 586.5 882.2 590.0 884.0C593.5 885.8 596.2 888.7 598.0 892.0C599.8 895.3 600.8 900.0 601.0 904.0C601.2 908.0 600.7 912.3 599.0 916.0C597.3 919.7 594.5 923.6 591.0 926.0C587.5 928.4 583.2 929.8 578.0 930.5C572.8 931.2 559.8 930.5 559.8 930.5C559.8 930.5 558.8 926.4 559.8 925.0C560.8 923.6 564.3 923.3 566.0 922.0C567.7 920.7 569.3 921.5 570.0 917.0C570.7 912.5 570.7 899.5 570.0 895.0C569.3 890.5 567.7 891.3 566.0 890.0C564.3 888.7 560.8 888.5 559.8 887.0C558.8 885.5 559.8 881.1 559.8 881.1Z" transform="translate(561.30 0) translate(0.00 0) scale(1.0000 1) translate(-0.00 0)"/><path d="M559.8 930.0C559.8 930.0 573.0 929.5 578.0 930.0C583.0 930.5 586.7 931.3 590.0 933.0C593.3 934.7 596.2 937.2 598.0 940.0C599.8 942.8 600.5 947.0 601.0 950.0C601.5 953.0 600.7 956.0 601.0 958.0C601.3 960.0 601.8 961.6 603.0 962.0C604.2 962.4 606.5 960.2 608.0 960.5C609.5 960.8 611.5 962.2 612.0 964.0C612.5 965.8 612.3 968.8 611.0 971.0C609.7 973.2 607.2 975.5 604.0 977.0C600.8 978.5 596.0 979.5 592.0 980.0C588.0 980.5 583.3 980.5 580.0 980.0C576.7 979.5 573.8 978.7 572.0 977.0C570.2 975.3 569.5 976.2 569.0 970.0C568.5 963.8 570.5 945.5 569.0 940.0C567.5 934.5 559.8 937.0 559.8 937.0L559.8 930.0Z" transform="translate(561.30 0) translate(0.00 0) scale(1.0000 1) translate(-0.00 0)"/><path d="M1174.0 881.8C1174.0 881.8 1205.8 881.5 1213.0 881.8C1220.2 882.1 1216.5 882.5 1217.3 883.5C1218.1 884.5 1218.1 886.7 1217.6 888.0C1217.0 889.3 1215.2 890.6 1214.0 891.3C1212.8 892.0 1211.3 891.8 1210.5 892.3C1209.7 892.8 1209.4 894.5 1209.4 894.5C1209.4 894.5 1208.9 950.7 1209.4 963.9C1210.0 977.1 1211.2 971.2 1212.7 973.7C1214.2 976.2 1218.4 978.6 1218.4 978.6L1218.4 981.1C1218.4 981.1 1214.2 981.5 1209.4 980.3C1204.6 979.1 1194.6 977.5 1189.7 973.7C1184.8 969.9 1181.7 962.8 1179.8 957.3C1177.9 951.8 1178.5 951.4 1178.2 940.9C1177.9 930.4 1178.2 894.5 1178.2 894.5C1178.2 894.5 1177.9 892.8 1177.0 892.3C1176.1 891.8 1174.2 892.0 1173.0 891.3C1171.8 890.6 1170.5 889.3 1170.0 888.0C1169.5 886.7 1169.6 884.5 1170.3 883.5C1171.0 882.5 1174.0 881.8 1174.0 881.8Z"/><path d="M1231.0 881.8C1231.0 881.8 1252.3 881.5 1257.0 881.8C1261.7 882.1 1259.0 882.5 1259.4 883.5C1259.8 884.5 1260.1 886.7 1259.4 888.0C1258.8 889.3 1257.2 890.6 1255.5 891.3C1253.8 892.0 1250.4 891.8 1249.0 892.3C1247.6 892.8 1247.1 894.5 1247.1 894.5C1247.1 894.5 1247.6 947.7 1247.1 960.6C1246.5 973.5 1245.7 969.1 1243.8 972.1C1241.9 975.1 1239.3 977.1 1235.6 978.6C1231.9 980.1 1221.7 981.1 1221.7 981.1L1221.7 978.6C1221.7 978.6 1227.8 976.2 1230.7 973.7C1233.6 971.2 1237.1 967.7 1238.9 963.9C1240.7 960.1 1241.0 962.4 1241.4 950.8C1241.8 939.2 1241.4 894.5 1241.4 894.5C1241.4 894.5 1241.5 892.8 1240.0 892.3C1238.5 891.8 1234.3 892.0 1232.3 891.3C1230.3 890.6 1228.8 889.3 1228.2 888.0C1227.6 886.7 1228.0 884.5 1228.5 883.5C1229.0 882.5 1231.0 881.8 1231.0 881.8Z"/></g>
<g fill="rgb(18,118,178)" clip-path="url(#lowc)"><path d="M240.5 879.8L241.0 888.7C241.0 888.7 236.6 888.9 234.7 889.8C232.8 890.7 230.7 892.4 229.7 894.3C228.7 896.2 228.1 898.8 228.6 901.0C229.1 903.2 230.2 905.7 232.5 907.6C234.8 909.5 238.6 910.7 242.5 912.6C246.4 914.5 251.8 916.5 255.9 918.8C260.0 921.1 264.0 923.8 267.0 926.6C270.0 929.4 272.0 932.0 273.7 935.5C275.4 939.0 276.9 943.6 277.1 947.7C277.3 951.8 276.9 955.9 274.8 960.0C272.8 964.1 268.9 969.1 264.8 972.2C260.7 975.4 254.7 977.5 250.3 978.9C245.9 980.3 238.6 980.6 238.6 980.6L238.1 970.0C238.1 970.0 245.2 968.4 247.0 966.7C248.8 965.0 249.6 962.4 249.2 960.0C248.8 957.6 247.2 954.6 244.8 952.2C242.4 949.8 238.4 947.7 234.7 945.5C231.0 943.3 226.2 941.4 222.5 938.8C218.8 936.2 215.2 932.9 212.5 929.9C209.8 926.9 207.7 924.5 206.4 921.0C205.1 917.5 204.2 913.0 204.5 908.7C204.8 904.4 205.8 899.5 208.0 895.4C210.2 891.3 214.3 886.7 218.0 884.2C221.7 881.7 226.2 881.2 230.0 880.5C233.8 879.8 240.5 879.8 240.5 879.8Z"/><path d="M242.5 879.8C242.5 879.8 255.5 882.4 259.2 882.6C262.9 882.8 262.9 881.2 264.8 880.9C266.7 880.6 269.2 880.3 270.4 880.9C271.6 881.5 271.7 879.0 272.0 884.2C272.3 889.4 272.6 907.1 272.0 912.1C271.4 917.1 269.4 914.3 268.2 914.3C267.0 914.3 265.9 913.8 264.8 912.1C263.7 910.4 263.0 906.9 261.5 904.3C260.0 901.7 257.9 898.6 255.9 896.5C253.8 894.4 251.4 892.8 249.2 891.5C247.0 890.2 242.5 888.7 242.5 888.7L242.5 879.8Z"/><path d="M235.9 980.6C235.9 980.6 224.4 977.0 220.3 976.7C216.2 976.4 213.9 978.9 211.4 978.9C208.9 978.9 206.4 978.2 205.2 976.7C204.0 975.2 204.3 975.2 204.1 970.0C203.9 964.8 203.3 950.2 204.1 945.5C204.9 940.8 207.5 941.8 209.1 941.6C210.7 941.4 212.3 942.6 213.6 944.4C214.9 946.2 215.2 949.1 216.9 952.2C218.6 955.4 221.2 960.5 223.6 963.3C226.0 966.1 229.3 967.8 231.4 968.9C233.5 970.0 235.9 970.0 235.9 970.0L235.9 980.6Z"/><path d="M279.5 881.5L319.0 881.5L319.0 978.5C319.0 978.5 287.8 979.5 281.0 978.9C274.2 978.3 278.6 976.4 278.4 975.0C278.1 973.6 278.7 971.6 279.5 970.5C280.3 969.4 281.8 969.0 283.0 968.5C284.2 968.0 286.7 967.8 286.7 967.8L286.7 892.0C286.7 892.0 284.3 891.2 283.0 890.5C281.7 889.8 279.8 889.1 279.0 888.0C278.2 886.9 278.3 885.1 278.4 884.0C278.5 882.9 279.5 881.5 279.5 881.5Z"/><path d="M312.0 881.5L353.5 881.5C353.5 881.5 354.1 904.7 353.5 909.9C352.9 915.1 351.3 912.4 350.2 912.6C349.1 912.8 347.7 912.8 346.8 911.0C345.9 909.2 345.9 904.9 344.6 902.1C343.3 899.3 341.0 896.1 339.0 894.3C337.0 892.5 336.9 892.1 332.4 891.5C327.9 890.9 312.0 890.9 312.0 890.9L312.0 881.5Z"/><path d="M312.0 924.3C312.0 924.3 320.7 924.8 323.5 924.3C326.3 923.8 327.5 922.7 329.0 921.0C330.5 919.3 331.3 916.1 332.4 914.3C333.5 912.4 334.6 910.5 335.7 909.9C336.8 909.2 338.1 909.7 339.0 910.4C339.9 911.1 340.9 908.6 341.3 914.3C341.7 920.0 341.7 938.6 341.3 944.4C340.9 950.1 339.9 948.1 339.0 948.8C338.1 949.5 337.0 949.9 335.7 948.8C334.4 947.7 332.5 944.2 331.2 942.2C329.9 940.2 331.1 937.9 327.9 936.6C324.7 935.3 312.0 934.4 312.0 934.4L312.0 924.3Z"/><path d="M312.0 968.9C312.0 968.9 328.6 968.0 333.5 966.7C338.4 965.4 339.1 963.9 341.3 961.1C343.5 958.3 345.3 952.2 346.8 950.0C348.3 947.8 349.1 947.9 350.2 947.7C351.3 947.5 352.7 947.7 353.5 948.8C354.3 949.9 354.9 951.2 355.2 954.4C355.5 957.6 355.2 967.8 355.2 967.8L355.7 978.3L312.0 978.3L312.0 968.9Z"/><path d="M383.7 881.4L413.7 881.4L434.0 967.0C434.0 967.0 438.2 967.8 439.5 969.0C440.8 970.2 441.7 972.4 441.7 974.0C441.7 975.6 440.8 977.9 439.5 978.8C438.2 979.7 434.0 979.2 434.0 979.2L398.0 979.2C398.0 979.2 394.0 977.5 393.5 976.0C393.0 974.5 394.1 971.9 395.0 970.5C395.9 969.1 399.0 967.5 399.0 967.5L383.7 881.4Z"/><path d="M379.9 899.2L383.0 902.0L372.5 962.0C372.5 962.0 375.7 966.2 377.0 968.0C378.3 969.8 380.1 971.2 380.4 973.0C380.7 974.8 380.1 977.5 379.0 978.5C377.9 979.5 374.0 979.2 374.0 979.2L349.0 979.2C349.0 979.2 345.7 976.6 345.5 975.0C345.3 973.4 346.4 970.8 348.0 969.5C349.6 968.2 355.0 967.4 355.0 967.4L360.0 964.0L377.5 901.0L379.9 899.2Z"/><path d="M377.2 944.3L394.4 944.3L394.4 955.0L377.2 955.0L377.2 944.3Z"/><path d="M435.0 881.3L456.0 881.3C456.0 881.3 456.0 887.3 454.9 889.3C453.8 891.3 451.4 891.2 449.6 893.2C447.8 895.2 445.6 898.1 444.3 901.2C443.0 904.3 442.5 909.2 441.6 911.8C440.7 914.3 440.0 916.0 439.0 916.5C438.0 917.0 436.4 915.5 435.7 914.5C435.0 913.5 435.1 916.0 435.0 910.5C434.9 905.0 435.0 881.3 435.0 881.3Z"/><path d="M458.9 881.3L492.8 881.3L492.8 967.0C492.8 967.0 497.3 967.7 498.7 968.9C500.1 970.1 501.2 972.7 501.4 974.3C501.6 975.9 500.9 977.5 500.0 978.3C499.1 979.1 496.0 978.9 496.0 978.9L455.0 978.9C455.0 978.9 450.0 976.0 449.6 974.3C449.2 972.6 451.3 970.1 452.9 968.9C454.4 967.7 458.9 967.0 458.9 967.0L458.9 881.3Z"/><path d="M495.0 881.3L516.0 881.3C516.0 881.3 516.5 904.1 516.0 910.0C515.5 915.9 514.2 915.7 513.0 916.5C511.8 917.3 510.2 916.9 509.0 915.0C507.8 913.1 507.2 908.3 506.0 905.0C504.8 901.7 503.5 897.4 502.0 895.0C500.5 892.6 498.2 892.8 497.0 890.5C495.8 888.2 495.0 881.3 495.0 881.3Z"/><path d="M516.0 881.1L556.0 881.1L556.0 968.0C556.0 968.0 559.5 968.5 561.0 969.5C562.5 970.5 564.5 972.5 565.0 974.0C565.5 975.5 564.8 977.8 564.0 978.6C563.2 979.4 560.0 978.6 560.0 978.6L520.0 978.6C520.0 978.6 515.9 975.5 515.7 974.0C515.5 972.5 517.7 970.5 519.0 969.5C520.3 968.5 523.3 968.0 523.3 968.0L523.3 892.0C523.3 892.0 520.2 891.0 519.0 890.0C517.8 889.0 516.5 887.5 516.0 886.0C515.5 884.5 516.0 881.1 516.0 881.1Z"/><path d="M559.8 881.1C559.8 881.1 572.0 880.6 577.0 881.1C582.0 881.6 586.5 882.2 590.0 884.0C593.5 885.8 596.2 888.7 598.0 892.0C599.8 895.3 600.8 900.0 601.0 904.0C601.2 908.0 600.7 912.3 599.0 916.0C597.3 919.7 594.5 923.6 591.0 926.0C587.5 928.4 583.2 929.8 578.0 930.5C572.8 931.2 559.8 930.5 559.8 930.5C559.8 930.5 558.8 926.4 559.8 925.0C560.8 923.6 564.3 923.3 566.0 922.0C567.7 920.7 569.3 921.5 570.0 917.0C570.7 912.5 570.7 899.5 570.0 895.0C569.3 890.5 567.7 891.3 566.0 890.0C564.3 888.7 560.8 888.5 559.8 887.0C558.8 885.5 559.8 881.1 559.8 881.1Z"/><path d="M559.8 930.0C559.8 930.0 573.0 929.5 578.0 930.0C583.0 930.5 586.7 931.3 590.0 933.0C593.3 934.7 596.2 937.2 598.0 940.0C599.8 942.8 600.5 947.0 601.0 950.0C601.5 953.0 600.7 956.0 601.0 958.0C601.3 960.0 601.8 961.6 603.0 962.0C604.2 962.4 606.5 960.2 608.0 960.5C609.5 960.8 611.5 962.2 612.0 964.0C612.5 965.8 612.3 968.8 611.0 971.0C609.7 973.2 607.2 975.5 604.0 977.0C600.8 978.5 596.0 979.5 592.0 980.0C588.0 980.5 583.3 980.5 580.0 980.0C576.7 979.5 573.8 978.7 572.0 977.0C570.2 975.3 569.5 976.2 569.0 970.0C568.5 963.8 570.5 945.5 569.0 940.0C567.5 934.5 559.8 937.0 559.8 937.0L559.8 930.0Z"/><path d="M383.7 881.4L413.7 881.4L434.0 967.0C434.0 967.0 438.2 967.8 439.5 969.0C440.8 970.2 441.7 972.4 441.7 974.0C441.7 975.6 440.8 977.9 439.5 978.8C438.2 979.7 434.0 979.2 434.0 979.2L398.0 979.2C398.0 979.2 394.0 977.5 393.5 976.0C393.0 974.5 394.1 971.9 395.0 970.5C395.9 969.1 399.0 967.5 399.0 967.5L383.7 881.4Z" transform="translate(259.60 0) translate(349.00 0) scale(0.9300 1) translate(-349.00 0)"/><path d="M379.9 899.2L383.0 902.0L372.5 962.0C372.5 962.0 375.7 966.2 377.0 968.0C378.3 969.8 380.1 971.2 380.4 973.0C380.7 974.8 380.1 977.5 379.0 978.5C377.9 979.5 374.0 979.2 374.0 979.2L349.0 979.2C349.0 979.2 345.7 976.6 345.5 975.0C345.3 973.4 346.4 970.8 348.0 969.5C349.6 968.2 355.0 967.4 355.0 967.4L360.0 964.0L377.5 901.0L379.9 899.2Z" transform="translate(259.60 0) translate(349.00 0) scale(0.9300 1) translate(-349.00 0)"/><path d="M377.2 944.3L394.4 944.3L394.4 955.0L377.2 955.0L377.2 944.3Z" transform="translate(259.60 0) translate(349.00 0) scale(0.9300 1) translate(-349.00 0)"/><path d="M731.8 879.3L731.8 888.0C731.8 888.0 728.0 888.8 726.5 890.0C725.0 891.2 723.6 892.5 723.0 895.0C722.4 897.5 722.8 895.0 722.7 905.0C722.7 915.0 722.5 945.2 722.7 955.0C722.9 964.8 723.1 961.7 724.0 964.0C724.9 966.3 726.7 967.9 728.0 969.0C729.3 970.1 731.8 970.5 731.8 970.5L731.8 980.5C731.8 980.5 717.8 979.4 712.0 977.0C706.2 974.6 700.7 970.5 697.0 966.0C693.3 961.5 691.4 956.0 690.0 950.0C688.6 944.0 688.2 936.7 688.4 930.0C688.6 923.3 689.2 916.2 691.0 910.0C692.8 903.8 695.3 897.5 699.0 893.0C702.7 888.5 707.5 885.3 713.0 883.0C718.5 880.7 731.8 879.3 731.8 879.3Z"/><path d="M735.6 879.3C735.6 879.3 742.1 880.9 745.0 882.0C747.9 883.1 750.6 885.9 753.0 885.7C755.4 885.6 757.2 882.0 759.2 881.1C761.2 880.2 764.0 879.6 765.3 880.4C766.6 881.2 766.5 880.0 766.8 885.7C767.0 891.4 767.5 909.0 766.8 914.7C766.0 920.4 763.8 919.8 762.3 920.0C760.8 920.2 759.2 919.1 757.7 916.2C756.2 913.3 755.1 906.3 753.1 902.5C751.1 898.7 748.4 895.6 745.5 893.3C742.6 891.0 735.6 888.8 735.6 888.8L735.6 879.3Z"/><path d="M735.6 980.5L735.6 969.5C735.6 969.5 745.2 966.2 748.6 963.4C752.0 960.6 753.9 955.1 756.2 952.7C758.5 950.3 760.4 948.6 762.3 948.9C764.2 949.2 767.1 951.4 767.6 954.3C768.1 957.2 767.7 962.7 765.3 966.5C762.9 970.3 758.0 974.8 753.1 977.1C748.2 979.4 735.6 980.5 735.6 980.5Z"/><path d="M771.0 881.9C778.6 881.1 807.8 881.1 815.5 881.9C823.2 882.7 817.4 885.1 817.1 886.5C816.9 887.9 815.0 889.6 814.0 890.5C813.0 891.4 811.0 892.0 811.0 892.0L811.0 968.0C811.0 968.0 813.0 968.6 814.0 969.5C815.0 970.4 816.9 972.0 817.1 973.5C817.4 975.0 823.2 977.8 815.5 978.6C807.8 979.5 778.6 979.4 771.0 978.6C763.4 977.8 769.6 975.5 769.9 974.0C770.2 972.5 771.7 970.5 773.0 969.5C774.3 968.5 777.5 968.0 777.5 968.0L777.5 892.0C777.5 892.0 774.3 891.4 773.0 890.5C771.7 889.6 770.2 887.9 769.9 886.5C769.6 885.1 763.4 882.7 771.0 881.9Z"/><path d="M826.2 881.9C826.2 881.9 855.3 881.0 861.3 881.9C867.3 882.8 862.4 885.6 862.0 887.0C861.6 888.4 860.7 889.5 859.0 890.5C857.3 891.5 854.4 891.5 852.0 893.0C849.6 894.5 847.0 896.7 844.5 899.4C842.0 902.1 842.1 903.5 836.9 909.3C831.6 915.1 813.0 934.0 813.0 934.0L811.0 918.0C811.0 918.0 829.3 897.7 832.0 893.0C834.7 888.3 828.1 891.2 827.0 890.0C825.9 888.8 825.6 886.9 825.5 885.5C825.4 884.1 826.2 881.9 826.2 881.9Z"/><path d="M812.5 932.2L838.4 912.4L861.3 969.5C861.3 969.5 864.6 970.4 865.5 971.5C866.4 972.6 866.9 974.8 866.6 976.0C866.4 977.2 864.0 978.6 864.0 978.6L820.0 978.6C820.0 978.6 817.7 975.9 817.5 974.5C817.3 973.1 818.0 971.3 819.0 970.5C820.0 969.7 823.2 969.5 823.2 969.5L811.0 937.0L812.5 932.2Z"/><path d="M279.5 881.5L319.0 881.5L319.0 978.5C319.0 978.5 287.8 979.5 281.0 978.9C274.2 978.3 278.6 976.4 278.4 975.0C278.1 973.6 278.7 971.6 279.5 970.5C280.3 969.4 281.8 969.0 283.0 968.5C284.2 968.0 286.7 967.8 286.7 967.8L286.7 892.0C286.7 892.0 284.3 891.2 283.0 890.5C281.7 889.8 279.8 889.1 279.0 888.0C278.2 886.9 278.3 885.1 278.4 884.0C278.5 882.9 279.5 881.5 279.5 881.5Z" transform="translate(588.60 0) translate(0.00 0) scale(1.0000 1) translate(-0.00 0)"/><path d="M312.0 881.5L353.5 881.5C353.5 881.5 354.1 904.7 353.5 909.9C352.9 915.1 351.3 912.4 350.2 912.6C349.1 912.8 347.7 912.8 346.8 911.0C345.9 909.2 345.9 904.9 344.6 902.1C343.3 899.3 341.0 896.1 339.0 894.3C337.0 892.5 336.9 892.1 332.4 891.5C327.9 890.9 312.0 890.9 312.0 890.9L312.0 881.5Z" transform="translate(588.60 0) translate(0.00 0) scale(1.0000 1) translate(-0.00 0)"/><path d="M312.0 924.3C312.0 924.3 320.7 924.8 323.5 924.3C326.3 923.8 327.5 922.7 329.0 921.0C330.5 919.3 331.3 916.1 332.4 914.3C333.5 912.4 334.6 910.5 335.7 909.9C336.8 909.2 338.1 909.7 339.0 910.4C339.9 911.1 340.9 908.6 341.3 914.3C341.7 920.0 341.7 938.6 341.3 944.4C340.9 950.1 339.9 948.1 339.0 948.8C338.1 949.5 337.0 949.9 335.7 948.8C334.4 947.7 332.5 944.2 331.2 942.2C329.9 940.2 331.1 937.9 327.9 936.6C324.7 935.3 312.0 934.4 312.0 934.4L312.0 924.3Z" transform="translate(588.60 0) translate(0.00 0) scale(1.0000 1) translate(-0.00 0)"/><path d="M312.0 968.9C312.0 968.9 328.6 968.0 333.5 966.7C338.4 965.4 339.1 963.9 341.3 961.1C343.5 958.3 345.3 952.2 346.8 950.0C348.3 947.8 349.1 947.9 350.2 947.7C351.3 947.5 352.7 947.7 353.5 948.8C354.3 949.9 354.9 951.2 355.2 954.4C355.5 957.6 355.2 967.8 355.2 967.8L355.7 978.3L312.0 978.3L312.0 968.9Z" transform="translate(588.60 0) translate(0.00 0) scale(1.0000 1) translate(-0.00 0)"/><path d="M516.0 881.1L556.0 881.1L556.0 968.0C556.0 968.0 559.5 968.5 561.0 969.5C562.5 970.5 564.5 972.5 565.0 974.0C565.5 975.5 564.8 977.8 564.0 978.6C563.2 979.4 560.0 978.6 560.0 978.6L520.0 978.6C520.0 978.6 515.9 975.5 515.7 974.0C515.5 972.5 517.7 970.5 519.0 969.5C520.3 968.5 523.3 968.0 523.3 968.0L523.3 892.0C523.3 892.0 520.2 891.0 519.0 890.0C517.8 889.0 516.5 887.5 516.0 886.0C515.5 884.5 516.0 881.1 516.0 881.1Z" transform="translate(428.00 0) translate(0.00 0) scale(1.0000 1) translate(-0.00 0)"/><path d="M559.8 881.1C559.8 881.1 572.0 880.6 577.0 881.1C582.0 881.6 586.5 882.2 590.0 884.0C593.5 885.8 596.2 888.7 598.0 892.0C599.8 895.3 600.8 900.0 601.0 904.0C601.2 908.0 600.7 912.3 599.0 916.0C597.3 919.7 594.5 923.6 591.0 926.0C587.5 928.4 583.2 929.8 578.0 930.5C572.8 931.2 559.8 930.5 559.8 930.5C559.8 930.5 558.8 926.4 559.8 925.0C560.8 923.6 564.3 923.3 566.0 922.0C567.7 920.7 569.3 921.5 570.0 917.0C570.7 912.5 570.7 899.5 570.0 895.0C569.3 890.5 567.7 891.3 566.0 890.0C564.3 888.7 560.8 888.5 559.8 887.0C558.8 885.5 559.8 881.1 559.8 881.1Z" transform="translate(428.00 0) translate(0.00 0) scale(1.0000 1) translate(-0.00 0)"/><path d="M559.8 930.0C559.8 930.0 573.0 929.5 578.0 930.0C583.0 930.5 586.7 931.3 590.0 933.0C593.3 934.7 596.2 937.2 598.0 940.0C599.8 942.8 600.5 947.0 601.0 950.0C601.5 953.0 600.7 956.0 601.0 958.0C601.3 960.0 601.8 961.6 603.0 962.0C604.2 962.4 606.5 960.2 608.0 960.5C609.5 960.8 611.5 962.2 612.0 964.0C612.5 965.8 612.3 968.8 611.0 971.0C609.7 973.2 607.2 975.5 604.0 977.0C600.8 978.5 596.0 979.5 592.0 980.0C588.0 980.5 583.3 980.5 580.0 980.0C576.7 979.5 573.8 978.7 572.0 977.0C570.2 975.3 569.5 976.2 569.0 970.0C568.5 963.8 570.5 945.5 569.0 940.0C567.5 934.5 559.8 937.0 559.8 937.0L559.8 930.0Z" transform="translate(428.00 0) translate(0.00 0) scale(1.0000 1) translate(-0.00 0)"/><path d="M516.0 881.1L556.0 881.1L556.0 968.0C556.0 968.0 559.5 968.5 561.0 969.5C562.5 970.5 564.5 972.5 565.0 974.0C565.5 975.5 564.8 977.8 564.0 978.6C563.2 979.4 560.0 978.6 560.0 978.6L520.0 978.6C520.0 978.6 515.9 975.5 515.7 974.0C515.5 972.5 517.7 970.5 519.0 969.5C520.3 968.5 523.3 968.0 523.3 968.0L523.3 892.0C523.3 892.0 520.2 891.0 519.0 890.0C517.8 889.0 516.5 887.5 516.0 886.0C515.5 884.5 516.0 881.1 516.0 881.1Z" transform="translate(561.30 0) translate(0.00 0) scale(1.0000 1) translate(-0.00 0)"/><path d="M559.8 881.1C559.8 881.1 572.0 880.6 577.0 881.1C582.0 881.6 586.5 882.2 590.0 884.0C593.5 885.8 596.2 888.7 598.0 892.0C599.8 895.3 600.8 900.0 601.0 904.0C601.2 908.0 600.7 912.3 599.0 916.0C597.3 919.7 594.5 923.6 591.0 926.0C587.5 928.4 583.2 929.8 578.0 930.5C572.8 931.2 559.8 930.5 559.8 930.5C559.8 930.5 558.8 926.4 559.8 925.0C560.8 923.6 564.3 923.3 566.0 922.0C567.7 920.7 569.3 921.5 570.0 917.0C570.7 912.5 570.7 899.5 570.0 895.0C569.3 890.5 567.7 891.3 566.0 890.0C564.3 888.7 560.8 888.5 559.8 887.0C558.8 885.5 559.8 881.1 559.8 881.1Z" transform="translate(561.30 0) translate(0.00 0) scale(1.0000 1) translate(-0.00 0)"/><path d="M559.8 930.0C559.8 930.0 573.0 929.5 578.0 930.0C583.0 930.5 586.7 931.3 590.0 933.0C593.3 934.7 596.2 937.2 598.0 940.0C599.8 942.8 600.5 947.0 601.0 950.0C601.5 953.0 600.7 956.0 601.0 958.0C601.3 960.0 601.8 961.6 603.0 962.0C604.2 962.4 606.5 960.2 608.0 960.5C609.5 960.8 611.5 962.2 612.0 964.0C612.5 965.8 612.3 968.8 611.0 971.0C609.7 973.2 607.2 975.5 604.0 977.0C600.8 978.5 596.0 979.5 592.0 980.0C588.0 980.5 583.3 980.5 580.0 980.0C576.7 979.5 573.8 978.7 572.0 977.0C570.2 975.3 569.5 976.2 569.0 970.0C568.5 963.8 570.5 945.5 569.0 940.0C567.5 934.5 559.8 937.0 559.8 937.0L559.8 930.0Z" transform="translate(561.30 0) translate(0.00 0) scale(1.0000 1) translate(-0.00 0)"/><path d="M1174.0 881.8C1174.0 881.8 1205.8 881.5 1213.0 881.8C1220.2 882.1 1216.5 882.5 1217.3 883.5C1218.1 884.5 1218.1 886.7 1217.6 888.0C1217.0 889.3 1215.2 890.6 1214.0 891.3C1212.8 892.0 1211.3 891.8 1210.5 892.3C1209.7 892.8 1209.4 894.5 1209.4 894.5C1209.4 894.5 1208.9 950.7 1209.4 963.9C1210.0 977.1 1211.2 971.2 1212.7 973.7C1214.2 976.2 1218.4 978.6 1218.4 978.6L1218.4 981.1C1218.4 981.1 1214.2 981.5 1209.4 980.3C1204.6 979.1 1194.6 977.5 1189.7 973.7C1184.8 969.9 1181.7 962.8 1179.8 957.3C1177.9 951.8 1178.5 951.4 1178.2 940.9C1177.9 930.4 1178.2 894.5 1178.2 894.5C1178.2 894.5 1177.9 892.8 1177.0 892.3C1176.1 891.8 1174.2 892.0 1173.0 891.3C1171.8 890.6 1170.5 889.3 1170.0 888.0C1169.5 886.7 1169.6 884.5 1170.3 883.5C1171.0 882.5 1174.0 881.8 1174.0 881.8Z"/><path d="M1231.0 881.8C1231.0 881.8 1252.3 881.5 1257.0 881.8C1261.7 882.1 1259.0 882.5 1259.4 883.5C1259.8 884.5 1260.1 886.7 1259.4 888.0C1258.8 889.3 1257.2 890.6 1255.5 891.3C1253.8 892.0 1250.4 891.8 1249.0 892.3C1247.6 892.8 1247.1 894.5 1247.1 894.5C1247.1 894.5 1247.6 947.7 1247.1 960.6C1246.5 973.5 1245.7 969.1 1243.8 972.1C1241.9 975.1 1239.3 977.1 1235.6 978.6C1231.9 980.1 1221.7 981.1 1221.7 981.1L1221.7 978.6C1221.7 978.6 1227.8 976.2 1230.7 973.7C1233.6 971.2 1237.1 967.7 1238.9 963.9C1240.7 960.1 1241.0 962.4 1241.4 950.8C1241.8 939.2 1241.4 894.5 1241.4 894.5C1241.4 894.5 1241.5 892.8 1240.0 892.3C1238.5 891.8 1234.3 892.0 1232.3 891.3C1230.3 890.6 1228.8 889.3 1228.2 888.0C1227.6 886.7 1228.0 884.5 1228.5 883.5C1229.0 882.5 1231.0 881.8 1231.0 881.8Z"/></g>
<g fill="rgb(18,118,178)"><circle cx="1056.2" cy="966" r="14.7"/></g>
<path d="M93.5 838.0 L102.1 875.7 L121.9 842.5 L118.5 881.0 L147.6 855.6 L132.4 891.1 L167.9 875.9 L142.5 905.0 L181.0 901.6 L147.8 921.4 L185.5 930.0 L147.8 938.6 L181.0 958.4 L142.5 955.0 L167.9 984.1 L132.4 968.9 L147.6 1004.4 L118.5 979.0 L121.9 1017.5 L102.1 984.3 L93.5 1022.0 L84.9 984.3 L65.1 1017.5 L68.5 979.0 L39.4 1004.4 L54.6 968.9 L19.1 984.1 L44.5 955.0 L6.0 958.4 L39.2 938.6 L1.5 930.0 L39.2 921.4 L6.0 901.6 L44.5 905.0 L19.1 875.9 L54.6 891.1 L39.4 855.6 L68.5 881.0 L65.1 842.5 L84.9 875.7 Z M43.2 930.0 A50.3 50.3 0 0 1 143.8 930.0 Z" fill="rgb(18,118,178)" fill-rule="evenodd"/>
</g>
</svg>
<div class="u" style="left:922px;top:877.5px;font-size:17px;color:rgba(140,140,140,0.7);transform:scaleX(1.209);transform-origin:0 0">Активация Windows</div>
<div class="u" style="left:922px;top:902px;font-size:13.3px;color:rgba(140,140,140,0.7);transform:scaleX(1.137);transform-origin:0 0">Чтобы активировать Windows, перейдите в</div>
<div class="u" style="left:922px;top:922.5px;font-size:13.3px;color:rgba(140,140,140,0.7);transform:scaleX(1.137);transform-origin:0 0">раздел "Параметры".</div>

</body></html>
